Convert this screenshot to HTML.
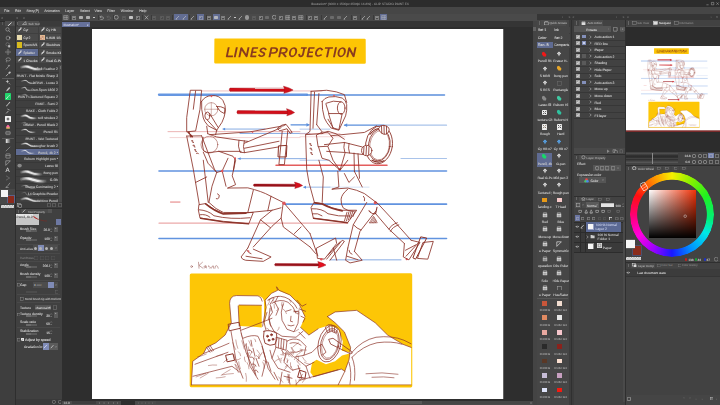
<!DOCTYPE html>
<html><head><meta charset="utf-8"><title>CLIP STUDIO PAINT</title>
<style>
html,body{margin:0;padding:0;background:#3f3f3f;}
body{width:720px;height:405px;overflow:hidden;position:relative;font-family:"Liberation Sans",sans-serif;}
#r{position:absolute;left:0;top:0;width:720px;height:405px;overflow:hidden;filter:blur(0.6px);}
#r div,#r span,#r svg{position:absolute;display:block;box-sizing:content-box;}
#r span{white-space:nowrap;text-rendering:geometricPrecision;-webkit-text-stroke:0.09px;}
</style></head>
<body>
<svg width="0" height="0" style="position:absolute">
<defs>
<linearGradient id="bsg" x1="0" y1="0" x2="1" y2="0"><stop offset="0" stop-color="#fff" stop-opacity=".25"/><stop offset=".3" stop-color="#fff" stop-opacity="1"/><stop offset=".7" stop-color="#fff" stop-opacity=".9"/><stop offset="1" stop-color="#fff" stop-opacity=".15"/></linearGradient>
<symbol id="art" viewBox="92 28.75 411.5 370.5" preserveAspectRatio="none">
<rect x="92" y="28.75" width="411.5" height="370.5" fill="#fff"/>
<!-- title box -->
<path d="M215.2 38.3 Q214.2 38.2 214.4 39.6 L214.2 62 Q214.3 63.3 215.6 63.2 L364.5 63.4 Q365.9 63.4 365.8 62 L365.7 39.8 Q365.8 38.2 364.3 38.4 Z" fill="#fdc504"/>
<g fill="none" stroke="#8a3b1e" stroke-width="1.9" stroke-linecap="square" stroke-linejoin="round"><path transform="translate(226.80 56.15) skewX(-12) scale(1 0.84) translate(0 -10)" d="M0 0V10H5.2"/><path transform="translate(234.90 56.15) skewX(-12) scale(1 0.84) translate(0 -10)" d="M0 0V10"/><path transform="translate(239.50 56.15) skewX(-12) scale(1 0.84) translate(0 -10)" d="M0 10V0L7.1 10V0"/><path transform="translate(251.10 56.15) skewX(-12) scale(1 0.84) translate(0 -10)" d="M4.2 0H0V10H4.2M0 5H3.57"/><path transform="translate(258.90 56.15) skewX(-12) scale(1 0.84) translate(0 -10)" d="M5.2 1.6Q2.86 -0.9 0.62 1.6Q-0.52 4 2.60 5Q5.72 6.2 4.68 8.6Q2.60 11 0 8.6"/><path transform="translate(269.60 56.15) skewX(-12) scale(1 0.84) translate(0 -10)" d="M0 10V0H3.10Q6.2 0.2 6.2 3Q6.2 5.8 3.10 6H0"/><path transform="translate(279.30 56.15) skewX(-12) scale(1 0.84) translate(0 -10)" d="M0 10V0H3.10Q6.2 0.2 6.2 3Q6.2 5.8 3.10 6H0M2.79 6L6.2 10"/><path transform="translate(289.10 56.15) skewX(-12) scale(1 0.84) translate(0 -10)" d="M3.05 0A3.05 5 0 1 0 3.05 10A3.05 5 0 1 0 3.05 0Z"/><path transform="translate(298.80 56.15) skewX(-12) scale(1 0.84) translate(0 -10)" d="M5.2 0H1.30M3.74 0V7Q3.74 10 1.82 10Q0.26 10 0 8"/><path transform="translate(307.50 56.15) skewX(-12) scale(1 0.84) translate(0 -10)" d="M4.3 0H0V10H4.3M0 5H3.65"/><path transform="translate(315.30 56.15) skewX(-12) scale(1 0.84) translate(0 -10)" d="M5.2 1.9Q3.12 -0.9 1.30 1.3Q-0.78 4 0.26 7.5Q1.82 11 5.2 8.4"/><path transform="translate(324.10 56.15) skewX(-12) scale(1 0.84) translate(0 -10)" d="M0 0H6.1M3.05 0V10"/><path transform="translate(334.10 56.15) skewX(-12) scale(1 0.84) translate(0 -10)" d="M0 0V10"/><path transform="translate(337.70 56.15) skewX(-12) scale(1 0.84) translate(0 -10)" d="M3.10 0A3.10 5 0 1 0 3.10 10A3.10 5 0 1 0 3.10 0Z"/><path transform="translate(347.40 56.15) skewX(-12) scale(1 0.84) translate(0 -10)" d="M0 10V0L6.2 10V0"/></g>
<!-- guide lines -->
<g fill="none" stroke-linecap="round">
<path d="M159 94.5 H307" stroke="#6697e2" stroke-width="2.3"/><path d="M307 94.8 H444.5" stroke="#5b8fdc" stroke-width="1.5"/>
<path d="M159 170.8 H446.5" stroke="#6193df" stroke-width="1.6"/>
<path d="M285.5 203.9 H446.5" stroke="#6193df" stroke-width="1.6"/>
<path d="M159 238.3 H446.5" stroke="#6193df" stroke-width="1.6"/>
<path d="M344.5 124.9 H384" stroke="#5b8fdc" stroke-width="1.3"/>
<path d="M384 124.9 H446.5" stroke="#a9c3ea" stroke-width="1.2"/>
<path d="M401 158.2 H446.5" stroke="#a9c3ea" stroke-width="1.1"/>
<path d="M330 259.6 H401" stroke="#7aa3e0" stroke-width="0.9"/>
<path d="M223 128.8 H265" stroke="#7aa3e0" stroke-width="0.9"/>
<path d="M240 133.2 H310" stroke="#7aa3e0" stroke-width="0.9"/>
<path d="M238 158.4 H306" stroke="#7aa3e0" stroke-width="0.9"/>
<path d="M291 124.6 H309" stroke="#5b8fdc" stroke-width="1.2"/>
<path d="M304 186.9 H330" stroke="#7aa3e0" stroke-width="0.8"/><path d="M330 186.9 H369" stroke="#c3d5f0" stroke-width="0.7"/>
<path d="M300 128.9 H330" stroke="#a9c3ea" stroke-width="0.9"/>
<path d="M300 160 H330" stroke="#a9c3ea" stroke-width="0.9"/>
<!-- red guide lines -->
<path d="M202 90.7 H322" stroke="#e9a3a3" stroke-width="0.7"/>
<path d="M168 131.4 H300" stroke="#e6a0a0" stroke-width="0.8"/>
<path d="M170 137.3 H300" stroke="#efc4c4" stroke-width="0.7"/>
<path d="M159 222.9 H347" stroke="#eca9a9" stroke-width="1.1"/>
<path d="M170.5 201.8 H180" stroke="#e06a6a" stroke-width="0.9"/>
<path d="M276 165 H387" stroke="#e35d5d" stroke-width="1.5"/>
<path d="M300 133.5 H340" stroke="#eeb5b5" stroke-width="0.8"/>
<path d="M300 136.5 H345" stroke="#f3cdcd" stroke-width="0.8"/>
</g>
<!-- arrows -->
<g stroke="#a01018" stroke-width="0.45" stroke-linejoin="round">
<path d="M230.0 87.85 L285.0 87.95 L285.0 91.15 L230.0 91.05 Q228.6 89.50 230.0 87.85Z" fill="#d20f1a"/><path d="M284.3 87.95 L283.5 85.90 Q289.8 87.52 293.1 89.80 Q289.8 91.66 283.8 93.10 L284.4 91.15Z" fill="#d20f1a"/>
<path d="M237.6 110.35 L288.0 110.45 L288.0 113.65 L237.6 113.55 Q236.2 112.00 237.6 110.35Z" fill="#d20f1a"/><path d="M287.3 110.45 L286.5 108.40 Q292.1 110.02 294.6 112.30 Q292.1 114.16 286.8 115.60 L287.4 113.65Z" fill="#d20f1a"/>
<path d="M254.1 183.85 L296.0 183.95 L296.0 186.15 L254.1 186.05 Q252.7 185.00 254.1 183.85Z" fill="#96121a"/><path d="M295.3 183.95 L294.5 181.80 Q300.1 183.24 302.6 185.30 Q300.1 186.92 294.8 188.20 L295.4 186.15Z" fill="#d8101c"/>
<path d="M275.2 263.35 L319.3 263.45 L319.3 265.65 L275.2 265.55 Q273.8 264.50 275.2 263.35Z" fill="#96121a"/><path d="M318.6 263.45 L317.8 261.30 Q323.4 262.74 326.0 264.80 Q323.4 266.42 318.1 267.70 L318.7 265.65Z" fill="#e4101e"/>
</g>
<!-- small blue arrowheads -->
<g fill="#5b8fdc">
<path d="M309.5 124.6 l-3 -1.8 v3.6z"/>
<path d="M344 124.9 l3.2 -1.9 v3.8z"/>
<path d="M303 186.9 l3 -1.5 v3z"/>
<path d="M238 158.4 l2.6 -1.4 v2.8z"/>
<path d="M222.5 128.8 l2.6 -1.4 v2.8z"/>
</g>
<!-- FIGURE 1 -->
<g fill="none" stroke="#8c3329" stroke-width="0.85" stroke-linecap="round" stroke-linejoin="round">
<path d="M190.7 90 L201.6 90 L200.6 101 L200 109 L195.6 130.7 L186.7 131.6 L186.7 117.8 Z"/>
<path d="M195.6 90.7 L193.3 109"/>
<path d="M188 132 L192.5 136.5 M189 132 L191 136.8" stroke-width="1.2"/>
<path d="M186.7 135.8 L193.3 168.9 L199.3 204.4"/>
<path d="M201.6 135.6 L214.4 168.9 L216.7 172.2"/>
<path d="M186.9 135.8 L201.6 135.6"/>
<path d="M191.5 140.5 q2 -0.8 1.2 0.8 q-0.8 1 0.8 1 M193 145 q2 -0.8 1.2 0.8 q-0.8 1 0.8 1 M194.4 149.5 q2 -0.8 1.2 0.8 q-0.8 1 0.8 1 M196.5 153 q1.5 -1 2 0.5" stroke-width="0.9"/>
<!-- head -->
<path d="M201.6 101.1 Q205 95.5 212.2 95.3 Q219 95 222.8 100 Q226 105 225.4 111 Q224.5 117 222 122 L216.7 130 L208.2 125.6 Q204 121 203.3 117.8 Q201 109 201.6 101.1Z"/>
<path d="M216.7 106.2 Q221 105.8 225 108.2 L224.4 113.3 Q220 112.5 216.7 106.2"/>
<circle cx="211.3" cy="109" r="6.6" stroke-width="0.45"/>
<path d="M211.3 102.4 V115.6 M204.7 109 H218" stroke-width="0.35"/>
<ellipse cx="207.3" cy="115.6" rx="2.4" ry="3.8"/>
<path d="M207 119.5 L216.7 130 M209.5 113 L218 127"/>
<path d="M206.7 126 L207.8 133.5 M216.7 130 L215.6 134.5"/>
<!-- shoulder, arm -->
<path d="M203 137 Q201.5 144 203.5 150.5 Q207 153.5 212 152 L218.9 151.1"/>
<circle cx="209.4" cy="144.4" r="8.4" stroke-width="0.5"/>
<path d="M207.8 133.5 Q213 135.5 216.7 136.7 L238.9 140 L247.8 141.1"/>
<path d="M218.9 151.1 L241.1 151.1"/>
<path d="M238.9 140 Q237.5 146 240 152 L244.5 152.4 Q242.5 146.5 244.3 140.6"/>
<path d="M244.3 143 L281 127.5 M244.5 152.4 L279 146.6 M244.5 148 L279 141"/>
<path d="M210 134.4 L250 131.6 L283.3 125.6 L285.6 124.4"/>
<path d="M277.8 127.8 Q282 123.8 286 124 L292.2 132.2 L290 133 L287 128.5 L280 130.5Z"/>
<path d="M282.2 131.1 L278.9 164.4 L284.4 164.4 L287.8 130.5"/>
<path d="M278.9 145.6 L286.9 145.2 L286.3 156.7 L278.4 156.7Z" stroke-width="1"/>
<!-- torso -->
<path d="M203.3 152 L208 163 L216.7 172.2 L212 186 L208.9 202.2"/>
<path d="M218.9 151.1 L233 156 L235.6 160 L232.2 175.6 L235.6 184.4 L227.8 187.8"/>
<path d="M228 158 L222.2 170.7 L216.7 172.2 M222.2 170.7 L226 186"/>
<path d="M235.1 158.2 L233.5 170" stroke-width="1"/>
<path d="M195.6 182.2 L206.7 176.7"/>
<path d="M203.3 160 L208.2 202"/>
<!-- hip and thigh -->
<path d="M227.8 187.8 L247.8 187.6 Q262 191 270 195.6 L283.3 202.2"/>
<path d="M208.9 202.2 Q216 209.5 223.3 212.2 L247.8 212.4 L272.2 210 L281 207.5"/>
<path d="M253.3 190 L247.8 212.2 M271 196 L267.8 210.5"/>
<path d="M217.5 193.5 q3 1 1.4 4 q-1 1.6 -2.6 1" />
<!-- seat -->
<path d="M199.3 204.4 L205.6 203.3 Q214 210 223.3 213.3 L253.3 212.2 L248.9 223.3 L223.3 221.1 L200 217.8 L198.4 210 Z"/>
<path d="M205.6 203.6 Q214 210.5 223.3 213.8 L246 213" stroke-width="1.5"/>
<path d="M199 209.5 Q208 210 214 215.5 Q230 219.5 250 217.5 M200 214.5 Q206 213.5 210 217"/>
<path d="M200.5 218 L223.3 221.6 L248.6 223.6" stroke-width="1.3"/>
<!-- legs -->
<path d="M283.3 202.2 L281.1 217.8 L283.3 226.7 L310 246.7"/>
<path d="M284.4 203.3 L310 233.3"/>
<path d="M272.2 210 L260.5 219.5 L247.8 247.8"/>
<path d="M281.1 217.8 L272 226 L253.3 246.7"/>
<path d="M260.5 219.5 L270.5 227.5" />
<path d="M301.1 226.7 L294.4 233.3"/>
<path d="M247.8 247.8 L241.1 256.7 Q242 259.5 245.6 260 L263.3 261.1 L271.1 256.7 L253.3 248.9"/>
<path d="M247 250 q1.5 3 4 3.5 M246 256 L262 258.5"/>
<path d="M310 233.3 L317.8 255.6 M310 246.7 L315.6 253.3"/>
<path d="M316.7 247.8 L335.6 237.8 L336.7 243.3 L324.4 258.9 L317.8 258.2Z"/>
<path d="M326.7 258.9 L342.2 240 L344.4 241.1 L330 260 M333.3 247.8 L336.7 260 M328 255 L340 241.5"/>
</g>
<!-- red dots fig 1 -->
<g fill="#e2565d">
<circle cx="222.2" cy="170.7" r="1.3"/><circle cx="284" cy="203" r="1.7"/><circle cx="235.1" cy="158" r="1"/>
<circle cx="321.3" cy="259" r="1.2"/><circle cx="406.7" cy="259" r="1.1"/><circle cx="375.3" cy="202.4" r="1.6"/><circle cx="339.6" cy="169" r="1.2"/>
<circle cx="211.5" cy="96" r="0.9"/><circle cx="334" cy="95.3" r="0.9"/><circle cx="252.5" cy="132" r="0.8"/>
<circle cx="248.5" cy="251" r="0.9"/>
</g>
<!-- FIGURE 2 -->
<g fill="none" stroke="#8c3329" stroke-width="0.85" stroke-linecap="round" stroke-linejoin="round">
<path d="M311.1 91.1 L326.7 90 Q337 91 344.4 94.4 L346.7 102.2"/>
<path d="M311.1 91.1 L310 131.1 L305.6 134.4 L306.7 168.9 L308.9 182 L314.4 202.2"/>
<path d="M318.9 93.3 L316.7 124.4 M314.5 92 L313 128"/>
<path d="M305.6 134.4 L322.2 133.3"/>
<path d="M309.5 143.5 q2 -0.8 1.2 0.8 q-0.8 1 0.8 1 M310 148 q2 -0.8 1.2 0.8 q-0.8 1 0.8 1 M310.5 152.5 q2 -0.8 1.2 0.8 q-0.8 1 0.8 1" stroke-width="0.9"/>
<path d="M322.2 101.1 Q324.5 97.5 328.9 96.7 Q336 95.5 342.2 97.8 Q346 100 346.7 104.4 Q347.2 110 345.6 115.6 L338.9 130 L331.1 127.8 Q326 122 324.4 117.8 Q321.8 109 322.2 101.1Z"/>
<ellipse cx="341.2" cy="107.8" rx="3.8" ry="6.2"/>
<path d="M326 103 Q333 99.5 341 101.5" />
<path d="M328.9 113.3 L342.2 113.3 L338.9 129.3 L333.3 127.8 Z"/>
<path d="M326 104 L328.9 113.3 M328 119 L333.3 127.8"/>
<path d="M316.7 124.4 L322 131.5 M322.2 133.3 L328 131 L336 133.5 L344.4 139"/>
<path d="M316.7 134.5 Q322 130.5 328 132 L333 138 L328 146 L318.5 146.5Z"/>
<path d="M331 135.5 L364.4 132.2 L376.7 125.6"/>
<path d="M324.4 144.4 L344.4 142.2 L362.2 146.7 M326.7 151.1 L344.4 152.2 L364.4 154.4"/>
<path d="M344.4 142.2 Q343 147 344.8 152.2 M349 143.2 Q347.8 148 349.5 152.8"/>
<ellipse cx="379" cy="144.6" rx="13.4" ry="19" transform="rotate(8 379 144.6)"/>
<ellipse cx="379.3" cy="144.8" rx="10.8" ry="16" transform="rotate(8 379.3 144.8)"/>
<ellipse cx="379.6" cy="145" rx="9.8" ry="14.8" transform="rotate(8 379.6 145)" stroke-width="0.5"/>
<path d="M372 160 Q378 163.5 384 160.5" stroke-width="1.3"/>
<path d="M370 134 Q374 129 378 128.5" stroke-width="1.2"/>
<circle cx="366.7" cy="150.3" r="5.2" fill="#fff"/>
<path d="M364 146.5 L363.5 154 M366.5 146 L366 154.8 M369 146.5 L368.6 154.5"/>
<path d="M378.5 128.5 Q380 124.8 384 125.2 Q388.8 125.8 389.2 129.5 Q389 133.2 385.5 134 Q381 134.5 378.5 128.5Z" fill="#fff"/>
<path d="M381.5 126 L381.8 133 M384 125.5 L384.2 133.8 M386.5 126 L386.6 133.5"/>
<!-- torso 2 -->
<path d="M318.9 160 L323.3 176.7 L322.2 202.2"/>
<path d="M318.5 146.5 L322 158 L328.9 160 L340 170 L347.8 160"/>
<path d="M337.8 171.1 L338.9 186.7 L332.2 188.9"/>
<path d="M354.4 171.1 L362.2 186.7 M354 152.8 L354.4 171.1 M358 153.5 L359.5 178"/>
<path d="M344.4 173.3 L348.9 182.2 L354.4 176.7"/>
<path d="M328 146.5 L333 160 L340 170 L345 153"/>
<path d="M332.2 188.9 L347.8 187.8 Q357 189.5 364.4 193.3 L377.8 203.3"/>
<path d="M347.8 188.9 Q341.5 194 341.1 198.9 Q340.8 204.5 343.3 207.8 Q347.5 210.8 353.3 211.1"/>
<path d="M363.5 196 q1.8 1.5 1 4.5"/>
<!-- seat 2 -->
<path d="M314.4 202.2 L322.2 203.3 Q332 208.5 342.2 210 L356.7 210 L347.8 222.2 L313.3 217.8 L311.1 207.8Z"/>
<path d="M314.6 202.6 L322.2 203.8 Q332 209 342.2 210.6" stroke-width="1.6"/>
<path d="M312 208.5 Q322 208 328 213.5 Q338 216.5 350 215.8 M312.5 213.5 Q318 212.5 322 215.5"/>
<path d="M313.5 218.2 L347.6 222.6" stroke-width="1.3"/>
<path d="M347 212 l-2.5 8.5 M349 211.5 l-2.5 9 M351 211.2 l-2.6 8.5 M353 211 l-2.6 7.5 M355 210.8 l-2 5.5" stroke-width="0.8"/>
<!-- legs 2 -->
<path d="M366.7 202.2 L353.3 224.4 L347.8 247.8"/>
<path d="M375.6 211.1 L360 231.1 L354.4 251.1"/>
<path d="M353.3 224.4 Q357 228.5 361 229.8"/>
<path d="M369 210.5 Q372 214.5 375.6 213.3 L377 207" stroke-width="1.1"/><path d="M369.5 222.5 L373.5 216 L377 222 M370.8 222.6 L374 217.2 M372.4 222.6 L374.6 218.6 M373.8 222.6 L375.4 219.6 M375.4 222.4 L376 220.6 M369.5 222.5 H377" stroke-width="0.6"/>
<path d="M377.8 203.3 L393.3 220 L411.1 240"/>
<path d="M375.6 213.3 L388.9 228.9 L404.4 243.3"/>
<path d="M388.9 228.9 Q391 224.5 397.3 222.5 M390.5 231 Q392.5 226.5 398.8 224.6"/>
<path d="M347.8 247.8 L345.6 260 L350 262.7 L362.2 260 L354.4 251.1"/>
<path d="M347 256 L358 259.5 M349 250 q0 3 3 4"/>
<path d="M404.4 243.3 L403.3 256.7 L408.9 259.6 L420 242.2 L411.1 240"/>
<path d="M405.5 250 L416 244.5 M406 256 L418 243" />
<path d="M421.1 236.7 L426.7 237.8 L415.6 258.9 L413.3 257.8Z" stroke-width="1"/>
<path d="M423.3 242.2 L433.3 241.1 L427.8 258.9 L417.8 258.2Z"/>
</g>
<!-- signature -->
<g fill="none" stroke="#9a5a55" stroke-width="0.55" stroke-linecap="round">
<circle cx="191.6" cy="266.3" r="0.9"/>
<path d="M198.5 262 L199 268 M202.5 262 L199 265.2 L203 268 M205.5 265.5 q-1.8 0 -1.6 1.5 q0.5 1.2 2 0 l0 -1.5 l0.5 2.2 M208.5 265.5 q-0.6 1.4 1.2 1.2 q1.4 0 0.4 1.4 M211.5 267.8 q0.4 -2.6 1.8 -2.2 l0.4 2.4 M215 268 l0.4 -2.2 q1.6 -1 2.2 0.4 l0.6 1.8"/>
</g>
<!-- bottom panel -->
<path d="M191.4 273.3 Q189.7 273.3 189.8 275 L189.7 385.6 Q189.8 387.1 191.3 387 L410.8 387.2 Q412.4 387.1 412.3 385.7 L412.2 274.6 Q412.2 273 410.6 273.1 Z" fill="#fdc606"/>
<g fill="#fff" stroke="none">
<path d="M191.4 384.6 L192.7 361 L203.5 353.3 L206.6 347.2 L215.9 342.5 L225.1 334.8 L228.2 328.6 L231.3 322.5 L229.6 303 Q229.8 295.6 236.4 295.3 L258 295.6 Q263 296.5 264 300.9 L264.4 327 L266.5 307 L265.5 300 L271.4 293.1 L277.6 290.1 L289.9 294.7 L299.2 304 L305 316.3 L300.5 327.1 L308.9 334.8 L318.1 328.6 L329 324.9 L338.2 328.6 L342.8 341 L341.8 350.5 L352.5 352.4 L342 355.2 L335.1 361 L325.9 364.1 L316.6 359.5 L312 362.6 L310.4 371.9 L313.5 376.5 L341.3 368.8 L345 371 L338.2 384.6 Z"/>
<path d="M327.4 316.3 L335.1 311.7 L356.7 310.1 L375.2 322.5 L387.6 334.8 L403 344.1 L411.2 347.2 L411.2 384.6 L338.2 384.6 L344.4 371.9 L349 359.5 L350.6 347.2 L344.4 331.7 L335.1 322.5 Z"/>
</g>
<path d="M239.2 304.8 Q238.2 304.8 238.2 305.8 L239.2 325.8 L249 326.2 L261.8 327.2 L261.6 305 Z" fill="#fdc606"/>
<!-- bottom line art -->
<g fill="none" stroke="#8c3329" stroke-width="0.7" stroke-linecap="round" stroke-linejoin="round">
<path d="M191.4 384.6 L192.7 361 L203.5 353.3 L206.6 347.2 L215.9 342.5 L225.1 334.8 L228.2 328.6 L231.3 322.5 L229.6 303 Q229.8 295.6 236.4 295.3 L258 295.6 Q261.5 296.5 262.2 300.9"/>
<path d="M239.2 304.8 L261.6 305 M238.2 305.8 L239.2 325.8"/>
<path d="M228.5 324 L239 322 L240.5 328 L229.5 330.5Z" stroke-width="0.9"/>
<path d="M231 331 L236 360 L243 378 M240 328 L246 352 L256 375"/>
<path d="M206.6 347.2 L210 352 M208 346 L212 351.5 M210 345.2 L213.5 350.5"/>
<path d="M203.5 353.3 L222 346 L229 343 M195 364 L228 352 M193 376 L232 366 L240 372"/>
<path d="M226 355 L233 353.5 L234.5 360 L227.5 361.5Z" stroke-width="1"/>
<path d="M241 330 L262 322 L272 318"/>
<path d="M243 338 Q252 334 258 336 L262 345 L268 368 L275 379"/>
<path d="M246 344 L250 366 L258 379 M251 340 l1 6 M253 348 l2 8 M256 358 l3 8"/>
<path d="M248 350 q3 -1 4 2 M250 357 q3 -1 4 2 M252 364 q3 -1 4 2 M254 370 q3 -1 4 2"/>
<!-- hair/head -->
<path d="M262.6 326 L266 307 L265 300 L271.4 293.1 L277.6 290.1 L276.5 286.5 L279 290 L289.9 294.7 L299.2 304 L305 316.3"/>
<path d="M268 300 Q276 294 285 297 Q293 300 297 308 M272 303 Q280 298 288 302 Q294 306 296 313"/>
<path d="M270 308 Q268 316 270 324 L274 331 M267 312 L264 322 L266 330"/>
<path d="M283 304 Q280 312 282 320 L287 329 L294 331.5 L298 323 L299 312"/>
<path d="M286 311 L291 309.5 M294 311.5 L298.5 311 M291 316 l-0.5 5 l2 0.5 M288 325 q3 1.5 6 0"/>
<path d="M297 300 L302 306 L306 304 M300 309 L305.5 311 M301 316 L305 318 L303 322"/>
<path d="M274 298 L270 304 L272.5 312 L268.5 318 L271 326"/>
<path d="M278 296 L275 302 L278.5 309 L276 315"/>
<!-- neck, collar, shoulder pad -->
<path d="M274 331 L282 336 L296 337 L303 331"/>
<path d="M264 331 Q262.5 337 265 343 Q270 346.5 275 344 Q278 339 276.5 333 Q270 329 264 331Z" stroke-width="0.9"/>
<circle cx="267.5" cy="336" r="1" fill="#8c3329"/><circle cx="271.5" cy="334.5" r="1" fill="#8c3329"/><circle cx="269" cy="340" r="1" fill="#8c3329"/><circle cx="273" cy="339" r="1" fill="#8c3329"/>
<path d="M276.5 337 L287 340 L286 350 L276 347Z"/>
<path d="M279 338 L278.3 347.6 M281.5 338.7 L280.8 348.3 M284 339.3 L283.3 349"/>
<path d="M287 341 Q293 337 300 340 L306 346 L304 355 L294 357 L287 350"/>
<path d="M290 343 Q296 341 301 345 M291 352 Q297 353 302 350"/>
<path d="M300.5 327.1 L308.9 334.8 L318.1 328.6 M304 355 L312 352 L318 346 M299 332 L305 338"/>
<path d="M276 347 L272 358 L278 368 L290 372 M286 352 L284 362 L292 370 L300 368"/>
<path d="M296 358 L306 366 L314 362 M298 365 L302 378 L296 384 M306 366 L310 378"/>
<path d="M262 346 L266 360 L262 376 M270 350 l2 8 M268 362 l3 9 M274 372 l4 8"/>
<path d="M282 372 L280 384 M288 374 L290 384 M284 376 L292 378"/>
<path d="M300 370 l6 2 l-1 6 l-7 -1z" stroke-width="1"/>
</g><g id="dens"><path d="M286.4 351.1Q287.5 352.7 289.1 356.1M291.7 347.3Q292.2 348.6 294.5 351.6M289.3 374.1Q290.2 377.3 289.3 380.3M288.5 379.2Q289.2 380.4 288.5 382.4M281.2 350.0Q282.8 351.6 284.0 352.7M287.8 364.6Q285.7 365.1 285.3 366.8M296.7 360.5Q298.1 363.1 300.2 364.5M297.3 354.3Q295.9 357.6 294.4 359.4M298.2 355.8Q298.7 357.6 298.2 360.9M291.2 347.3Q292.9 350.4 293.6 353.2M302.4 356.7Q304.1 359.7 306.0 361.3M304.4 362.1Q306.5 363.6 310.4 364.2M295.8 379.8Q296.3 381.3 296.3 384.7M290.4 351.7Q290.9 353.4 293.1 354.0M280.8 354.4Q282.3 354.7 284.1 354.8M302.6 373.9Q300.3 376.8 298.8 380.1M287.4 376.1Q286.8 377.5 287.3 379.9M291.1 366.0Q291.0 367.8 293.0 369.9M287.7 365.3Q286.2 367.8 284.2 369.6M278.6 376.6Q281.4 379.9 282.8 382.0M288.4 359.6Q286.8 360.5 287.0 362.6M281.7 357.6Q280.3 358.4 280.9 360.7M279.9 358.4Q276.6 359.4 274.7 361.4M287.1 358.4Q288.0 361.2 287.5 362.0M290.5 362.5Q290.2 365.5 290.8 367.2M281.7 346.8Q282.4 349.9 283.1 354.4M292.8 346.9Q296.0 344.1 298.4 342.3M287.6 351.7Q289.9 354.9 292.0 357.0M286.6 353.6Q285.7 357.5 283.6 360.2M298.5 353.7Q300.4 351.1 302.9 350.3M277.8 355.5Q279.3 359.9 280.9 362.6M305.7 378.5Q303.5 379.7 302.5 382.1M282.7 352.9Q286.2 353.8 289.8 354.1M300.2 348.9Q304.1 350.0 306.4 349.9M259.0 354.3Q259.3 357.3 258.3 358.5M251.9 351.6Q250.7 353.9 248.6 357.5M246.5 343.1Q246.4 345.7 244.9 346.3M257.1 349.9Q257.9 351.1 260.2 354.1M263.4 360.1Q266.3 361.7 267.8 361.9M248.2 346.6Q248.4 348.7 249.6 350.5M249.2 352.2Q248.1 354.4 247.2 356.2M262.1 352.3Q260.4 355.2 258.7 358.1M254.5 338.6Q255.7 339.3 255.7 341.4M253.5 362.7Q253.3 365.3 253.8 367.9M255.1 364.7Q254.1 367.1 254.1 368.5M254.2 357.1Q254.5 360.0 253.1 363.1M256.3 355.2Q258.1 356.7 259.8 358.4M262.8 361.8Q264.4 364.5 264.3 368.1M255.2 370.1Q255.2 371.0 255.4 373.6M248.8 340.5Q250.4 343.9 250.9 345.8M247.1 362.3Q249.0 364.9 249.0 368.6M263.1 351.5Q264.9 354.5 264.9 356.1M247.2 352.7Q247.9 354.7 249.3 355.9M244.4 356.8Q243.9 358.8 245.4 361.5M286.5 313.4Q285.6 310.2 282.8 308.5M273.6 297.3Q270.3 297.8 267.9 299.7M279.2 327.0Q279.2 328.7 277.6 330.2M289.2 299.0Q290.3 300.4 290.6 302.0M266.6 327.9Q268.6 328.1 269.2 330.1M295.1 311.4Q297.0 313.5 298.7 313.8M273.6 300.4Q273.7 301.0 275.2 303.5M271.3 306.6Q271.6 308.3 271.0 310.8M282.0 302.0Q280.9 304.5 281.7 306.0M283.8 302.4Q284.0 304.0 282.3 307.1M293.5 310.7Q295.8 311.3 298.0 311.1M299.4 307.7Q299.1 311.0 297.9 313.8M278.6 307.8Q278.1 308.7 276.7 310.5M269.9 298.9Q269.6 302.2 267.8 304.9M274.1 304.2Q274.2 305.6 274.5 307.9M298.6 329.1Q295.8 331.2 294.0 331.4M208.4 365.3Q212.5 364.4 216.7 364.8M216.2 356.1Q218.7 355.0 222.8 354.4M197.7 356.6Q202.1 355.7 206.3 353.8M222.3 374.6Q227.6 373.6 233.4 373.3M235.4 359.9Q238.6 359.9 240.4 358.3M221.1 375.1Q224.9 372.3 230.2 369.4M216.2 377.7Q221.5 377.5 225.2 376.5M223.7 362.0Q225.1 360.2 227.9 358.9M200.2 377.7Q204.6 375.3 208.3 372.9M196.1 376.7Q200.9 375.0 205.7 373.1M241.2 333.0Q241.4 335.6 242.4 337.2M234.9 364.0Q236.6 367.9 238.3 372.2M238.7 361.5Q238.7 364.3 240.4 368.5M235.6 364.2Q237.0 365.6 238.2 369.0M232.8 342.4Q233.8 345.8 235.6 349.2M238.5 351.5Q240.4 352.9 240.7 355.5M245.7 373.1Q246.9 377.0 246.3 381.1M235.8 339.7Q236.2 344.1 237.8 348.1M234.0 354.1Q234.7 358.9 235.4 362.1M241.8 340.6Q243.0 343.8 244.3 348.8" fill="none" stroke="#8c3329" stroke-width="0.5" stroke-linecap="round" opacity="0.85"/></g><g fill="none" stroke="#8c3329" stroke-width="0.7" stroke-linecap="round" stroke-linejoin="round"><!-- steering wheel -->
<ellipse cx="329.5" cy="343.5" rx="11.2" ry="18.6" transform="rotate(14 329.5 343.5)"/>
<ellipse cx="329.8" cy="343.8" rx="9" ry="15.8" transform="rotate(14 329.8 343.8)"/>
<ellipse cx="330" cy="344" rx="7.8" ry="14.2" transform="rotate(14 330 344)" stroke-width="0.45"/>
<path d="M325.5 326.5 Q328 323.5 331.5 324.5 Q335 325.5 337.5 329 L336 333 L331.5 331 L328 332.5Z"/>
<path d="M329 325 l0.5 6 M332 325.2 l0.3 6 M334.5 327 l-0.2 5"/>
<path d="M329 339 L333 338 L351.5 351.2 L352.3 352.8 L350.5 353.5 L331 344 Z" stroke-width="0.8"/>
<path d="M318 346 L322 344 L326 352 L322 355"/>
<!-- hood -->
<path d="M327.4 316.3 L335.1 311.7 L356.7 310.1 L375.2 322.5 L387.6 334.8 L403 344.1 L411.2 347.2"/>
<path d="M327.4 316.3 L335.1 322.5 L344.4 331.7 L350.6 347.2 L349 359.5 L344.4 371.9 L338.2 384.6"/>
<path d="M352 352 Q362 340 376 337 Q392 335 404 340 L411 343.5"/>
<path d="M352 357 Q363 345.5 377 342.5 Q392 340.5 402 344"/>
<path d="M349 362 Q352 372 350 384 M352 357 Q356 366 354.5 380"/>
<path d="M366 373.5 Q382 371.5 398 374 M372 377 Q384 376 394 377.5" stroke-width="0.6"/>
<path d="M313.5 376.5 L341.3 368.8 L345 371 M300 380 L338 369.5"/>
<path d="M191.4 384.6 L411.2 384.6" stroke-width="0.5"/>
</g>
</symbol>
</defs>
</svg>

<div id="r">
<div style="left:0.00px;top:0.00px;width:720.00px;height:6.80px;background:#2c2c2c;"></div>
<div style="left:0.00px;top:6.80px;width:720.00px;height:6.80px;background:#464646;"></div>
<div style="left:0.00px;top:13.60px;width:720.00px;height:7.30px;background:#4a4a4a;"></div>
<div style="left:0.00px;top:13.60px;width:62.00px;height:7.30px;background:#363636;"></div>
<div style="left:536.50px;top:14.20px;width:183.50px;height:5.60px;background:#363636;"></div>
<div style="left:62.00px;top:20.90px;width:474.00px;height:6.30px;background:#353535;"></div>
<div style="left:62.00px;top:27.00px;width:471.00px;height:373.50px;background:#2e2e2e;"></div>
<span style="left:309.50px;top:2.02px;font-size:3.2px;line-height:4.80px;height:4.80px;color:#8a8a8a;width:101.00px;text-align:center;clip-path:inset(-1px 0 -1px 0);">Illustration* (3000 x 1500px 350dpi 14.8%) - CLIP STUDIO PAINT EX</span>
<svg style="left:703.00px;top:1.00px;" width="17" height="6" viewBox="0 0 17 6"><path d="M3.4 3.8h2.2M8.4 1.4h2.4v2.4h-2.4zM13.4 1.4l2.4 2.4M15.8 1.4l-2.4 2.4" stroke="#a2a2a2" stroke-width="0.55" fill="none"/></svg>
<span style="left:3.90px;top:9.02px;font-size:3.5px;line-height:5.25px;height:5.25px;color:#c4c4c4;">File</span>
<span style="left:15.00px;top:9.02px;font-size:3.5px;line-height:5.25px;height:5.25px;color:#c4c4c4;">Edit</span>
<span style="left:26.40px;top:9.02px;font-size:3.5px;line-height:5.25px;height:5.25px;color:#c4c4c4;">Story(P)</span>
<span style="left:44.20px;top:9.02px;font-size:3.5px;line-height:5.25px;height:5.25px;color:#c4c4c4;">Animation</span>
<span style="left:65.30px;top:9.02px;font-size:3.5px;line-height:5.25px;height:5.25px;color:#c4c4c4;">Layer</span>
<span style="left:79.90px;top:9.02px;font-size:3.5px;line-height:5.25px;height:5.25px;color:#c4c4c4;">Select</span>
<span style="left:94.40px;top:9.02px;font-size:3.5px;line-height:5.25px;height:5.25px;color:#c4c4c4;">View</span>
<span style="left:107.20px;top:9.02px;font-size:3.5px;line-height:5.25px;height:5.25px;color:#c4c4c4;">Filter</span>
<span style="left:120.80px;top:9.02px;font-size:3.5px;line-height:5.25px;height:5.25px;color:#c4c4c4;">Window</span>
<span style="left:139.20px;top:9.02px;font-size:3.5px;line-height:5.25px;height:5.25px;color:#c4c4c4;">Help</span>
<svg style="left:63.20px;top:14.80px;" width="5.6" height="5.2" viewBox="0 0 5.6 5.2"><path d="M0.6 0.6h4.4v4h-4.4zM0.6 2.6h4.4M2 0.6v4M3.6 0.6v4" stroke="#c8c8c8" stroke-width="0.4" fill="none"/></svg>
<svg style="left:72.10px;top:15.50px" width="4.10" height="4.10"><rect x="0.28" y="0.28" width="3.55" height="3.55" rx="0.40" ry="0.40" fill="none" stroke="#c8c8c8" stroke-width="0.55"/></svg>
<div style="left:73.10px;top:17.10px;width:1.80px;height:1.20px;background:#c8c8c8;opacity:.5;"></div>
<div style="left:79.00px;top:16.00px;width:4.00px;height:3.00px;background:#c8c8c8;border-radius:0.8px;opacity:.8;"></div>
<div style="left:86.00px;top:16.00px;width:4.00px;height:3.00px;background:#c8c8c8;border-radius:0.8px;opacity:.8;"></div>
<div style="left:93.00px;top:17.20px;width:2.00px;height:0.50px;background:#c8c8c8;"></div>
<svg style="left:98.50px;top:14.90px;" width="5" height="5" viewBox="0 0 5 5"><path d="M1 1.8h2.2a1.3 1.3 0 0 1 0 2.6H1.4M1 1.8l1.2-1.2M1 1.8l1.2 1.2" stroke="#c8c8c8" stroke-width="0.5" fill="none"/></svg>
<svg style="left:106.00px;top:14.90px;" width="5" height="5" viewBox="0 0 5 5"><path d="M1 1.8h2.2a1.3 1.3 0 0 1 0 2.6H1.4M1 1.8l1.2-1.2M1 1.8l1.2 1.2" stroke="#737373" stroke-width="0.5" fill="none"/></svg>
<svg style="left:114.40px;top:15.30px" width="4.50" height="4.50"><rect x="0.28" y="0.28" width="3.95" height="3.95" rx="1.98" ry="1.98" fill="none" stroke="#c8c8c8" stroke-width="0.55"/></svg>
<svg style="left:122.10px;top:15.50px" width="4.10" height="4.10"><rect x="0.28" y="0.28" width="3.55" height="3.55" rx="0.40" ry="0.40" fill="none" stroke="#737373" stroke-width="0.55"/></svg>
<div style="left:123.10px;top:17.10px;width:1.80px;height:1.20px;background:#737373;opacity:.5;"></div>
<div style="left:128.50px;top:16.00px;width:4.00px;height:3.00px;background:#e2e2e2;border-radius:0.8px;opacity:.8;"></div>
<svg style="left:135.60px;top:15.50px" width="4.10" height="4.10"><rect x="0.28" y="0.28" width="3.55" height="3.55" rx="0.40" ry="0.40" fill="none" stroke="#c8c8c8" stroke-width="0.55"/></svg>
<div style="left:136.60px;top:17.10px;width:1.80px;height:1.20px;background:#c8c8c8;opacity:.5;"></div>
<svg style="left:143.80px;top:14.90px;" width="5" height="5" viewBox="0 0 5 5"><path d="M0.8 0.6L4.2 4.4M4.2 0.6L0.8 4.4" stroke="#c8c8c8" stroke-width="0.6" fill="none"/></svg>
<svg style="left:152.10px;top:15.50px" width="4.10" height="4.10"><rect x="0.28" y="0.28" width="3.55" height="3.55" rx="0.40" ry="0.40" fill="none" stroke="#737373" stroke-width="0.55"/></svg>
<div style="left:153.10px;top:17.10px;width:1.80px;height:1.20px;background:#737373;opacity:.5;"></div>
<svg style="left:159.60px;top:15.50px" width="4.10" height="4.10"><rect x="0.28" y="0.28" width="3.55" height="3.55" rx="0.40" ry="0.40" fill="none" stroke="#737373" stroke-width="0.55"/></svg>
<div style="left:160.60px;top:17.10px;width:1.80px;height:1.20px;background:#737373;opacity:.5;"></div>
<svg style="left:166.10px;top:15.50px" width="4.10" height="4.10"><rect x="0.28" y="0.28" width="3.55" height="3.55" rx="0.40" ry="0.40" fill="none" stroke="#737373" stroke-width="0.55"/></svg>
<div style="left:167.10px;top:17.10px;width:1.80px;height:1.20px;background:#737373;opacity:.5;"></div>
<div style="left:174.20px;top:14.30px;width:6.80px;height:6.00px;background:#626d93;"></div>
<svg style="left:175.10px;top:14.90px;" width="5" height="5" viewBox="0 0 5 5"><path d="M0.8 4.2L4 1M0.8 4.2h1.4" stroke="#c8c8c8" stroke-width="0.6" fill="none"/></svg>
<div style="left:181.00px;top:14.30px;width:6.80px;height:6.00px;background:#626d93;"></div>
<svg style="left:181.90px;top:14.90px;" width="5" height="5" viewBox="0 0 5 5"><path d="M0.8 4.2L4 1M0.8 4.2h1.4" stroke="#c8c8c8" stroke-width="0.6" fill="none"/></svg>
<svg style="left:189.50px;top:14.90px;" width="5" height="5" viewBox="0 0 5 5"><path d="M0.8 4.2L4 1M0.8 4.2h1.4" stroke="#c8c8c8" stroke-width="0.6" fill="none"/></svg>
<div style="left:197.00px;top:14.30px;width:6.80px;height:6.00px;background:#626d93;"></div>
<svg style="left:198.50px;top:15.50px" width="4.10" height="4.10"><rect x="0.28" y="0.28" width="3.55" height="3.55" rx="0.40" ry="0.40" fill="none" stroke="#c8c8c8" stroke-width="0.55"/></svg>
<div style="left:199.50px;top:17.10px;width:1.80px;height:1.20px;background:#c8c8c8;opacity:.5;"></div>
<svg style="left:207.10px;top:15.50px" width="4.10" height="4.10"><rect x="0.28" y="0.28" width="3.55" height="3.55" rx="0.40" ry="0.40" fill="none" stroke="#c8c8c8" stroke-width="0.55"/></svg>
<div style="left:208.10px;top:17.10px;width:1.80px;height:1.20px;background:#c8c8c8;opacity:.5;"></div>
<div style="left:212.80px;top:14.30px;width:6.80px;height:6.00px;background:#626d93;"></div>
<div style="left:214.20px;top:16.00px;width:4.00px;height:3.00px;background:#c8c8c8;border-radius:0.8px;opacity:.8;"></div>
<svg style="left:221.10px;top:15.50px" width="4.10" height="4.10"><rect x="0.28" y="0.28" width="3.55" height="3.55" rx="0.40" ry="0.40" fill="none" stroke="#c8c8c8" stroke-width="0.55"/></svg>
<div style="left:222.10px;top:17.10px;width:1.80px;height:1.20px;background:#c8c8c8;opacity:.5;"></div>
<svg style="left:226.50px;top:14.90px;" width="5" height="5" viewBox="0 0 5 5"><path d="M0.8 4.2L4 1M0.8 4.2h1.4" stroke="#c8c8c8" stroke-width="0.6" fill="none"/></svg>
<div style="left:234.00px;top:17.20px;width:2.00px;height:0.50px;background:#c8c8c8;"></div>
<svg style="left:237.50px;top:14.90px;" width="5" height="5" viewBox="0 0 5 5"><path d="M0.8 4.2L4 1M0.8 4.2h1.4" stroke="#c8c8c8" stroke-width="0.6" fill="none"/></svg>
<div style="left:244.80px;top:15.20px;width:4.4px;height:4.4px;border-radius:50%;background:#989898;"></div>
<svg style="left:252.10px;top:15.50px" width="4.10" height="4.10"><rect x="0.28" y="0.28" width="3.55" height="3.55" rx="0.40" ry="0.40" fill="none" stroke="#737373" stroke-width="0.55"/></svg>
<div style="left:253.10px;top:17.10px;width:1.80px;height:1.20px;background:#737373;opacity:.5;"></div>
<svg style="left:258.60px;top:15.50px" width="4.10" height="4.10"><rect x="0.28" y="0.28" width="3.55" height="3.55" rx="0.40" ry="0.40" fill="none" stroke="#c8c8c8" stroke-width="0.55"/></svg>
<div style="left:259.60px;top:17.10px;width:1.80px;height:1.20px;background:#c8c8c8;opacity:.5;"></div>
<div style="left:265.00px;top:16.00px;width:4.00px;height:3.00px;background:#737373;border-radius:0.8px;opacity:.8;"></div>
<svg style="left:271.60px;top:15.30px" width="4.50" height="4.50"><rect x="0.28" y="0.28" width="3.95" height="3.95" rx="1.98" ry="1.98" fill="none" stroke="#c8c8c8" stroke-width="0.55"/></svg>
<svg style="left:278.60px;top:15.50px" width="4.10" height="4.10"><rect x="0.28" y="0.28" width="3.55" height="3.55" rx="0.40" ry="0.40" fill="none" stroke="#c8c8c8" stroke-width="0.55"/></svg>
<div style="left:279.60px;top:17.10px;width:1.80px;height:1.20px;background:#c8c8c8;opacity:.5;"></div>
<svg style="left:284.50px;top:14.80px;" width="5.6" height="5.2" viewBox="0 0 5.6 5.2"><path d="M0.6 0.6h4.4v4h-4.4zM0.6 2.6h4.4M2 0.6v4M3.6 0.6v4" stroke="#c8c8c8" stroke-width="0.4" fill="none"/></svg>
<svg style="left:292.10px;top:15.50px" width="4.10" height="4.10"><rect x="0.28" y="0.28" width="3.55" height="3.55" rx="0.40" ry="0.40" fill="none" stroke="#c8c8c8" stroke-width="0.55"/></svg>
<div style="left:293.10px;top:17.10px;width:1.80px;height:1.20px;background:#c8c8c8;opacity:.5;"></div>
<svg style="left:298.20px;top:14.80px;" width="5.6" height="5.2" viewBox="0 0 5.6 5.2"><path d="M0.6 0.6h4.4v4h-4.4zM0.6 2.6h4.4M2 0.6v4M3.6 0.6v4" stroke="#c8c8c8" stroke-width="0.4" fill="none"/></svg>
<svg style="left:307.60px;top:15.50px" width="4.10" height="4.10"><rect x="0.28" y="0.28" width="3.55" height="3.55" rx="0.40" ry="0.40" fill="none" stroke="#c8c8c8" stroke-width="0.55"/></svg>
<div style="left:308.60px;top:17.10px;width:1.80px;height:1.20px;background:#c8c8c8;opacity:.5;"></div>
<svg style="left:314.40px;top:15.50px" width="4.10" height="4.10"><rect x="0.28" y="0.28" width="3.55" height="3.55" rx="0.40" ry="0.40" fill="none" stroke="#c8c8c8" stroke-width="0.55"/></svg>
<div style="left:315.40px;top:17.10px;width:1.80px;height:1.20px;background:#c8c8c8;opacity:.5;"></div>
<svg style="left:322.50px;top:14.90px;" width="5" height="5" viewBox="0 0 5 5"><path d="M0.8 4.2L4 1M0.8 4.2h1.4" stroke="#c8c8c8" stroke-width="0.6" fill="none"/></svg>
<div style="left:330.00px;top:16.00px;width:4.00px;height:3.00px;background:#737373;border-radius:0.8px;opacity:.8;"></div>
<div style="left:336.70px;top:16.00px;width:4.00px;height:3.00px;background:#737373;border-radius:0.8px;opacity:.8;"></div>
<svg style="left:343.00px;top:14.90px;" width="5" height="5" viewBox="0 0 5 5"><path d="M0.8 4.2L4 1M0.8 4.2h1.4" stroke="#c8c8c8" stroke-width="0.6" fill="none"/></svg>
<svg style="left:353.10px;top:15.50px" width="4.10" height="4.10"><rect x="0.28" y="0.28" width="3.55" height="3.55" rx="0.40" ry="0.40" fill="none" stroke="#c8c8c8" stroke-width="0.55"/></svg>
<div style="left:354.10px;top:17.10px;width:1.80px;height:1.20px;background:#c8c8c8;opacity:.5;"></div>
<svg style="left:360.50px;top:14.90px;" width="5" height="5" viewBox="0 0 5 5"><path d="M0.8 4.2L4 1M0.8 4.2h1.4" stroke="#c8c8c8" stroke-width="0.6" fill="none"/></svg>
<svg style="left:366.30px;top:14.90px;" width="5" height="5" viewBox="0 0 5 5"><path d="M0.8 4.2L4 1M0.8 4.2h1.4" stroke="#c8c8c8" stroke-width="0.6" fill="none"/></svg>
<svg style="left:375.10px;top:15.50px" width="4.10" height="4.10"><rect x="0.28" y="0.28" width="3.55" height="3.55" rx="0.40" ry="0.40" fill="none" stroke="#c8c8c8" stroke-width="0.55"/></svg>
<div style="left:376.10px;top:17.10px;width:1.80px;height:1.20px;background:#c8c8c8;opacity:.5;"></div>
<div style="left:380.40px;top:14.30px;width:6.80px;height:6.00px;background:#626d93;"></div>
<svg style="left:381.00px;top:14.80px;" width="5.6" height="5.2" viewBox="0 0 5.6 5.2"><path d="M0.6 0.6h4.4v4h-4.4zM0.6 2.6h4.4M2 0.6v4M3.6 0.6v4" stroke="#c8c8c8" stroke-width="0.4" fill="none"/></svg>
<div style="left:70.00px;top:15.00px;width:0.40px;height:4.60px;background:#3a3a3a;"></div>
<div style="left:97.50px;top:15.00px;width:0.40px;height:4.60px;background:#3a3a3a;"></div>
<div style="left:112.50px;top:15.00px;width:0.40px;height:4.60px;background:#3a3a3a;"></div>
<div style="left:142.00px;top:15.00px;width:0.40px;height:4.60px;background:#3a3a3a;"></div>
<div style="left:150.50px;top:15.00px;width:0.40px;height:4.60px;background:#3a3a3a;"></div>
<div style="left:172.00px;top:15.00px;width:0.40px;height:4.60px;background:#3a3a3a;"></div>
<div style="left:188.50px;top:15.00px;width:0.40px;height:4.60px;background:#3a3a3a;"></div>
<div style="left:196.00px;top:15.00px;width:0.40px;height:4.60px;background:#3a3a3a;"></div>
<div style="left:205.50px;top:15.00px;width:0.40px;height:4.60px;background:#3a3a3a;"></div>
<div style="left:305.50px;top:15.00px;width:0.40px;height:4.60px;background:#3a3a3a;"></div>
<div style="left:320.50px;top:15.00px;width:0.40px;height:4.60px;background:#3a3a3a;"></div>
<div style="left:350.50px;top:15.00px;width:0.40px;height:4.60px;background:#3a3a3a;"></div>
<div style="left:359.50px;top:15.00px;width:0.40px;height:4.60px;background:#3a3a3a;"></div>
<div style="left:373.00px;top:15.00px;width:0.40px;height:4.60px;background:#3a3a3a;"></div>
<div style="left:62.00px;top:21.90px;width:28.20px;height:4.90px;background:#65709a;"></div>
<span style="left:63.50px;top:23.02px;font-size:3.1px;line-height:4.65px;height:4.65px;color:#cfd3e4;">Illustration*</span>
<span style="left:87.00px;top:23.02px;font-size:2.8px;line-height:4.20px;height:4.20px;color:#d8dcea;">x</span>
<svg style="left:92px;top:28.75px" width="411.5" height="370.5"><use href="#art" x="0" y="0" width="411.5" height="370.5"/></svg>
<div style="left:62.00px;top:400.50px;width:471.00px;height:4.50px;background:#4a4a4a;"></div>
<span style="left:63.50px;top:401.02px;font-size:3.2px;line-height:4.80px;height:4.80px;color:#bdbdbd;">14.8</span>
<div style="left:72.00px;top:401.40px;width:24.00px;height:2.60px;background:#3e3e3e;"></div>
<div style="left:120.60px;top:401.00px;width:14.00px;height:3.60px;background:#2d2d2d;"></div>
<span style="left:99.00px;top:401.02px;font-size:3px;line-height:4.50px;height:4.50px;color:#9a9a9a;">•</span>
<span style="left:103.50px;top:401.02px;font-size:3px;line-height:4.50px;height:4.50px;color:#9a9a9a;">•</span>
<span style="left:108.00px;top:401.02px;font-size:3px;line-height:4.50px;height:4.50px;color:#9a9a9a;">•</span>
<span style="left:113.00px;top:401.02px;font-size:3px;line-height:4.50px;height:4.50px;color:#9a9a9a;">•</span>
<span style="left:117.00px;top:401.02px;font-size:3px;line-height:4.50px;height:4.50px;color:#9a9a9a;">•</span>
<span style="left:138.00px;top:401.02px;font-size:3px;line-height:4.50px;height:4.50px;color:#8a8a8a;">◦</span>
<span style="left:141.50px;top:401.02px;font-size:3px;line-height:4.50px;height:4.50px;color:#8a8a8a;">◦</span>
<span style="left:145.00px;top:401.02px;font-size:3px;line-height:4.50px;height:4.50px;color:#8a8a8a;">◦</span>
<span style="left:148.50px;top:401.02px;font-size:3px;line-height:4.50px;height:4.50px;color:#8a8a8a;">◦</span>
<span style="left:152.00px;top:401.02px;font-size:3px;line-height:4.50px;height:4.50px;color:#8a8a8a;">◦</span>
<div style="left:156.00px;top:401.20px;width:374.00px;height:3.00px;background:#464646;"></div>
<div style="left:400.00px;top:401.40px;width:22.00px;height:2.60px;background:#585858;"></div>
<div style="left:530.00px;top:401.60px;width:2.40px;height:2.40px;background:#606060;"></div>
<div style="left:0.00px;top:20.90px;width:15.60px;height:384.10px;background:#3e3e3e;"></div>
<div style="left:15.60px;top:20.90px;width:46.40px;height:384.10px;background:#3f3f3f;"></div>
<div style="left:15.30px;top:20.90px;width:0.50px;height:384.10px;background:#2e2e2e;"></div>
<div style="left:0.00px;top:20.90px;width:62.00px;height:0.40px;background:#2d2d2d;"></div>
<span style="left:1.20px;top:16.02px;font-size:3.5px;line-height:5.25px;height:5.25px;color:#7a7a7a;">«</span>
<span style="left:16.20px;top:16.02px;font-size:3.2px;line-height:4.80px;height:4.80px;color:#7a7a7a;">×</span>
<span style="left:23.00px;top:16.02px;font-size:3.5px;line-height:5.25px;height:5.25px;color:#7a7a7a;">«</span>
<div style="left:4.50px;top:21.40px;width:10.50px;height:5.00px;background:#4d4d4d;"></div>
<div style="left:1.80px;top:22.30px;width:0.50px;height:3.20px;background:#5a5a5a;"></div>
<div style="left:12.60px;top:22.30px;width:0.50px;height:3.20px;background:#5a5a5a;"></div>
<svg style="left:6.50px;top:21.60px;" width="6" height="4.6" viewBox="0 0 6 4.6"><path d="M0.8 4L4.6 0.6" stroke="#e6e6e6" stroke-width="0.9"/></svg>
<svg style="left:4.60px;top:27.00px;" width="6" height="6" viewBox="0 0 6 6"><circle cx="2.5" cy="2.4" r="1.7" stroke="#c2c2c2" stroke-width="0.5" fill="none"/><path d="M3.7 3.7L5.4 5.4" stroke="#c2c2c2" stroke-width="0.55"/></svg>
<svg style="left:4.60px;top:34.50px;" width="6" height="6" viewBox="0 0 6 6"><circle cx="3" cy="3" r="1.9" stroke="#c2c2c2" stroke-width="0.45" fill="none"/><circle cx="4.8" cy="2.8" r="0.7" fill="#c2c2c2"/></svg>
<svg style="left:4.60px;top:42.00px;" width="6" height="6" viewBox="0 0 6 6"><circle cx="2.6" cy="2.4" r="1.7" stroke="#c2c2c2" stroke-width="0.45" fill="none" stroke-dasharray="0.8 0.4"/><rect x="3.2" y="3.2" width="2" height="2.2" fill="#c2c2c2"/></svg>
<svg style="left:4.60px;top:49.30px;" width="6" height="6" viewBox="0 0 6 6"><path d="M3 0.6v4.8M0.6 3h4.8M3 .5l-.7.8M3 .5l.7.8M3 5.5l-.7-.8M3 5.5l.7-.8M.5 3l.8-.7M.5 3l.8.7M5.5 3l-.8-.7M5.5 3l-.8.7" stroke="#c2c2c2" stroke-width="0.4" fill="none"/></svg>
<svg style="left:4.60px;top:56.60px;" width="6" height="6" viewBox="0 0 6 6"><ellipse cx="3.2" cy="2.4" rx="2.2" ry="1.6" stroke="#c2c2c2" stroke-width="0.45" fill="none"/><path d="M1.6 3.6q-.6 1 .2 1.8" stroke="#c2c2c2" stroke-width="0.5" fill="none"/></svg>
<svg style="left:4.60px;top:64.00px;" width="6" height="6" viewBox="0 0 6 6"><path d="M1 5.4L3.6 2.2" stroke="#c2c2c2" stroke-width="0.55"/><path d="M4 .4l.4 1 1 .3-1 .4-.4 1-.4-1-1-.4 1-.3z" fill="#c2c2c2"/></svg>
<svg style="left:4.60px;top:71.30px;" width="6" height="6" viewBox="0 0 6 6"><path d="M1 5.2L3.6 2.4" stroke="#c2c2c2" stroke-width="0.8"/><path d="M3.3 1.6l1.3 1.3 .9-.9a.9 .9 0 0 0-1.3-1.3z" fill="#c2c2c2"/></svg>
<svg style="left:4.60px;top:79.00px;" width="6" height="6" viewBox="0 0 6 6"><path d="M2.4.6l.5 1.4 1.4.5-1.4.5-.5 1.4-.5-1.4-1.4-.5 1.4-.5z" fill="#c2c2c2"/><path d="M3.6 3.8L5.2 5.4" stroke="#c2c2c2" stroke-width="0.55"/></svg>
<svg style="left:4.60px;top:86.30px;" width="6" height="6" viewBox="0 0 6 6"><path d="M1 5.4L2 3.4 4.2 1 5.2 2 3 4.4z" fill="#c2c2c2"/></svg>
<div style="left:4.50px;top:93.40px;width:6.20px;height:6.40px;background:#22d36b;border-radius:0.6px;"></div>
<svg style="left:4.60px;top:93.60px;" width="6" height="6" viewBox="0 0 6 6"><path d="M1.2 5L3.2 2.6 4.6 1.2" stroke="#e9fff1" stroke-width="0.8"/><path d="M3.8 3.8l1.6 1.4" stroke="#0c7a3a" stroke-width="0.5"/></svg>
<svg style="left:4.60px;top:101.00px;" width="6" height="6" viewBox="0 0 6 6"><path d="M1 5.4q.2-1.6 1.4-2L4.6.8l.7.7-2.5 2.4q-.2 1.2-1.8 1.5z" fill="#c2c2c2"/></svg>
<svg style="left:4.60px;top:108.20px;" width="6" height="6" viewBox="0 0 6 6"><path d="M1.2 5.4L3.4 3" stroke="#c2c2c2" stroke-width="0.8"/><circle cx="3.8" cy="1.6" r="0.6" fill="#c2c2c2"/><circle cx="5" cy="2.6" r="0.4" fill="#c2c2c2"/><circle cx="2.6" cy="1" r="0.4" fill="#c2c2c2"/></svg>
<div style="left:4.60px;top:115.50px;width:6.00px;height:6.00px;background:#f1f1f1;border-radius:0.5px;"></div>
<svg style="left:4.60px;top:115.50px;" width="6" height="6" viewBox="0 0 6 6"><path d="M3 1l.6 1.4 1.4.6-1.4.6L3 5l-.6-1.4L1 3l1.4-.6z" fill="#444"/></svg>
<svg style="left:4.60px;top:122.90px;" width="6" height="6" viewBox="0 0 6 6"><path d="M1.4 3.4Q3 .2 4.6 3.4v1.4H1.4z" fill="#ff6aa0"/><rect x="1.2" y="4.4" width="3.6" height="1.2" fill="#ffd36a"/></svg>
<svg style="left:4.60px;top:130.20px;" width="6" height="6" viewBox="0 0 6 6"><rect x="0.8" y="1.4" width="4.4" height="3.2" rx="0.6" stroke="#c2c2c2" stroke-width="0.45" fill="none"/><path d="M.8 3h4.4" stroke="#c2c2c2" stroke-width="0.5"/></svg>
<svg style="left:4.60px;top:138.40px;" width="6" height="6" viewBox="0 0 6 6"><defs><linearGradient id="gg"><stop offset="0" stop-color="#eee"/><stop offset="1" stop-color="#555"/></linearGradient></defs><rect x="0.8" y="1" width="4.4" height="4" fill="url(#gg)"/></svg>
<svg style="left:4.60px;top:145.60px;" width="6" height="6" viewBox="0 0 6 6"><path d="M.8 5.2L5.2.8" stroke="#c2c2c2" stroke-width="0.5"/></svg>
<svg style="left:4.60px;top:153.00px;" width="6" height="6" viewBox="0 0 6 6"><rect x="0.9" y="0.9" width="4.2" height="4.2" rx="0.5" stroke="#c2c2c2" stroke-width="0.5" fill="none"/><path d="M.9 2.6h4.2" stroke="#c2c2c2" stroke-width="0.5"/></svg>
<svg style="left:4.60px;top:160.30px;" width="6" height="6" viewBox="0 0 6 6"><path d="M.8.8h4.6L.8 5.4z" stroke="#c2c2c2" stroke-width="0.55" fill="none"/></svg>
<span style="left:5.50px;top:165.96px;font-size:6.2px;line-height:9.30px;height:9.30px;color:#dcdcdc;">A</span>
<svg style="left:4.60px;top:175.00px;" width="6" height="6" viewBox="0 0 6 6"><path d="M1 .8l3.6 2.2L1 5.2" stroke="#8a8a8a" stroke-width="0.5" fill="none"/></svg>
<svg style="left:4.60px;top:182.30px;" width="6" height="6" viewBox="0 0 6 6"><path d="M.8 5.2q1.4-.2 2-1.4L5 .8" stroke="#c2c2c2" stroke-width="0.55" fill="none"/><path d="M.6 5.6h3" stroke="#c2c2c2" stroke-width="0.5"/></svg>
<div style="left:2.00px;top:78.40px;width:11.50px;height:0.50px;background:#5c5c5c;"></div>
<div style="left:2.00px;top:137.60px;width:11.50px;height:0.50px;background:#5c5c5c;"></div>
<div style="left:0.00px;top:188.60px;width:15.30px;height:15.40px;background:#484848;"></div>
<div style="left:7.00px;top:195.20px;width:7.80px;height:8.20px;background:#5a6288;"></div>
<div style="left:7.60px;top:195.80px;width:6.60px;height:7.00px;background:#8a2a1c;"></div>
<div style="left:0.90px;top:189.80px;width:7.20px;height:7.00px;background:#f4f4f4;"></div>
<div style="left:1.2px;top:205.2px;width:12.8px;height:2.6px;background:repeating-conic-gradient(#fff 0 25%,#9a9a9a 0 50%) 0 0/1.6px 1.6px;"></div>
<div style="left:16.00px;top:20.90px;width:46.00px;height:4.90px;background:#3b3b3b;"></div>
<div style="left:17.80px;top:20.90px;width:21.30px;height:4.90px;background:#4e4e4e;"></div>
<div style="left:16.80px;top:21.80px;width:0.50px;height:3.00px;background:#666;"></div>
<svg style="left:22.00px;top:21.40px;" width="5" height="4" viewBox="0 0 5 4"><path d="M.6 3.6L3.6.6l.8 3z" stroke="#ddd" stroke-width="0.5" fill="none"/></svg>
<span style="left:28.50px;top:22.02px;font-size:2.9px;line-height:4.35px;height:4.35px;color:#a9a9a9;">Sub Tool</span>
<div style="left:16.20px;top:26.70px;width:22.30px;height:6.50px;background:#494949;"></div>
<svg style="left:16.80px;top:27.30px;" width="5.4" height="5.4" viewBox="0 0 5.4 5.4"><path d="M.8 4.8L2 2.6 3.8.9l.9.9-1.9 1.8z" fill="#dedede"/><path d="M3 .8h2" stroke="#dedede" stroke-width="0.5"/></svg>
<span style="left:23.20px;top:28.02px;font-size:3.4px;line-height:5.10px;height:5.10px;color:#d2d2d2;width:15.00px;clip-path:inset(-1px 0 -1px 0);">Cyr</span>
<div style="left:39.10px;top:26.70px;width:22.30px;height:6.50px;background:#494949;"></div>
<svg style="left:39.70px;top:27.30px;" width="5.4" height="5.4" viewBox="0 0 5.4 5.4"><path d="M.8 4.8L2 2.6 3.8.9l.9.9-1.9 1.8z" fill="#dedede"/><path d="M3 .8h2" stroke="#dedede" stroke-width="0.5"/></svg>
<span style="left:46.10px;top:28.02px;font-size:3.4px;line-height:5.10px;height:5.10px;color:#d2d2d2;width:15.00px;clip-path:inset(-1px 0 -1px 0);">Cy HB</span>
<div style="left:16.20px;top:34.22px;width:22.30px;height:6.50px;background:#494949;"></div>
<div style="left:16.60px;top:34.72px;width:5.60px;height:5.60px;background:#e9dcae;"></div>
<span style="left:23.20px;top:36.02px;font-size:3.4px;line-height:5.10px;height:5.10px;color:#d2d2d2;width:15.00px;clip-path:inset(-1px 0 -1px 0);">Cyr2</span>
<div style="left:39.10px;top:34.22px;width:22.30px;height:6.50px;background:#494949;"></div>
<div style="left:39.50px;top:34.72px;width:5.60px;height:5.60px;background:#e3b890;"></div>
<div style="left:40.3px;top:35.519999999999996px;width:4px;height:4px;background:repeating-conic-gradient(#b47a5a 0 25%,#f2d2b8 0 50%) 0 0/1.4px 1.4px;"></div>
<span style="left:46.10px;top:36.02px;font-size:3.4px;line-height:5.10px;height:5.10px;color:#d2d2d2;width:15.00px;clip-path:inset(-1px 0 -1px 0);">K.BiiB 1/1</span>
<div style="left:16.20px;top:41.74px;width:22.30px;height:6.50px;background:#494949;"></div>
<div style="left:16.60px;top:42.24px;width:5.60px;height:5.60px;background:#d8bb1e;"></div>
<span style="left:23.20px;top:43.02px;font-size:3.4px;line-height:5.10px;height:5.10px;color:#d2d2d2;width:15.00px;clip-path:inset(-1px 0 -1px 0);">Spench/1</span>
<div style="left:39.10px;top:41.74px;width:22.30px;height:6.50px;background:#494949;"></div>
<svg style="left:39.70px;top:42.34px;" width="5.4" height="5.4" viewBox="0 0 5.4 5.4"><path d="M.8 4.8L2 2.6 3.8.9l.9.9-1.9 1.8z" fill="#dedede"/><path d="M3 .8h2" stroke="#dedede" stroke-width="0.5"/></svg>
<span style="left:46.10px;top:43.02px;font-size:3.4px;line-height:5.10px;height:5.10px;color:#d2d2d2;width:15.00px;clip-path:inset(-1px 0 -1px 0);">Sketches</span>
<div style="left:16.20px;top:49.26px;width:22.30px;height:6.50px;background:#5f6b92;"></div>
<svg style="left:16.80px;top:49.86px;" width="5.4" height="5.4" viewBox="0 0 5.4 5.4"><path d="M.8 4.8L2 2.6 3.8.9l.9.9-1.9 1.8z" fill="#dedede"/><path d="M3 .8h2" stroke="#dedede" stroke-width="0.5"/></svg>
<span style="left:23.20px;top:51.02px;font-size:3.4px;line-height:5.10px;height:5.10px;color:#d2d2d2;width:15.00px;clip-path:inset(-1px 0 -1px 0);">Splatter</span>
<div style="left:39.10px;top:49.26px;width:22.30px;height:6.50px;background:#494949;"></div>
<svg style="left:39.70px;top:49.86px;" width="5.4" height="5.4" viewBox="0 0 5.4 5.4"><path d="M.8 4.8L2 2.6 3.8.9l.9.9-1.9 1.8z" fill="#dedede"/><path d="M3 .8h2" stroke="#dedede" stroke-width="0.5"/></svg>
<span style="left:46.10px;top:51.02px;font-size:3.4px;line-height:5.10px;height:5.10px;color:#d2d2d2;width:15.00px;clip-path:inset(-1px 0 -1px 0);">Smoke Kk</span>
<div style="left:16.20px;top:56.78px;width:22.30px;height:6.50px;background:#494949;"></div>
<svg style="left:16.80px;top:57.38px;" width="5.4" height="5.4" viewBox="0 0 5.4 5.4"><path d="M.8 4.8L2 2.6 3.8.9l.9.9-1.9 1.8z" fill="#dedede"/><path d="M3 .8h2" stroke="#dedede" stroke-width="0.5"/></svg>
<span style="left:23.20px;top:59.02px;font-size:3.4px;line-height:5.10px;height:5.10px;color:#d2d2d2;width:15.00px;clip-path:inset(-1px 0 -1px 0);">1 Checks</span>
<div style="left:39.10px;top:56.78px;width:22.30px;height:6.50px;background:#494949;"></div>
<svg style="left:39.70px;top:57.38px;" width="5.4" height="5.4" viewBox="0 0 5.4 5.4"><path d="M.8 4.8L2 2.6 3.8.9l.9.9-1.9 1.8z" fill="#dedede"/><path d="M3 .8h2" stroke="#dedede" stroke-width="0.5"/></svg>
<span style="left:46.10px;top:59.02px;font-size:3.4px;line-height:5.10px;height:5.10px;color:#d2d2d2;width:15.00px;clip-path:inset(-1px 0 -1px 0);">Real G-Pen</span>
<div style="left:16.00px;top:64.60px;width:43.50px;height:137.60px;background:#3f3f3f;"></div>
<div style="left:59.40px;top:64.60px;width:2.20px;height:137.60px;background:#4a4a4a;"></div>
<div style="left:59.70px;top:66.00px;width:1.60px;height:3.00px;background:#707070;"></div>
<div style="left:16.00px;top:72.00px;width:43.40px;height:0.35px;background:#383838;"></div>
<svg style="left:20.00px;top:65.40px;" width="30" height="7" viewBox="0 0 30 7"><path d="M1.5 2.2Q6 .4 10.5 2.6T21 4.2" stroke="url(#bsg)" stroke-width="3.60" fill="none" stroke-linecap="round" opacity="0.26"/><path d="M1.5 2.2Q6 .4 10.5 2.6T21 4.2" stroke="url(#bsg)" stroke-width="2.00" fill="none" stroke-linecap="round" opacity="0.85"/></svg>
<span style="left:16.50px;top:67.02px;font-size:3.4px;line-height:5.10px;height:5.10px;color:#c6c6c6;width:41.50px;text-align:right;clip-path:inset(-1px 0 -1px 0);">Soft Feather 2</span>
<div style="left:16.00px;top:78.95px;width:43.40px;height:0.35px;background:#383838;"></div>
<span style="left:16.50px;top:74.02px;font-size:3.4px;line-height:5.10px;height:5.10px;color:#c6c6c6;width:41.50px;text-align:right;clip-path:inset(-1px 0 -1px 0);">PAINT - Flat Bristle Sharp 3</span>
<div style="left:16.00px;top:85.90px;width:43.40px;height:0.35px;background:#383838;"></div>
<svg style="left:20.00px;top:79.30px;" width="30" height="7" viewBox="0 0 30 7"><path d="M1.5 2.2Q6 .4 7.5 2.6T15 4.2" stroke="url(#bsg)" stroke-width="1.26" fill="none" stroke-linecap="round" opacity="0.24"/><path d="M1.5 2.2Q6 .4 7.5 2.6T15 4.2" stroke="url(#bsg)" stroke-width="0.70" fill="none" stroke-linecap="round" opacity="0.80"/></svg>
<span style="left:16.50px;top:81.02px;font-size:3.4px;line-height:5.10px;height:5.10px;color:#c6c6c6;width:41.50px;text-align:right;clip-path:inset(-1px 0 -1px 0);">DRAW - Loose 3</span>
<div style="left:16.00px;top:92.85px;width:43.40px;height:0.35px;background:#383838;"></div>
<svg style="left:20.00px;top:86.25px;" width="30" height="7" viewBox="0 0 30 7"><path d="M1.5 2.2Q6 .4 6.0 2.6T12 4.2" stroke="url(#bsg)" stroke-width="1.26" fill="none" stroke-linecap="round" opacity="0.22"/><path d="M1.5 2.2Q6 .4 6.0 2.6T12 4.2" stroke="url(#bsg)" stroke-width="0.70" fill="none" stroke-linecap="round" opacity="0.75"/></svg>
<span style="left:16.50px;top:88.02px;font-size:3.4px;line-height:5.10px;height:5.10px;color:#c6c6c6;width:41.50px;text-align:right;clip-path:inset(-1px 0 -1px 0);">Den.Spon 1800 2</span>
<div style="left:16.00px;top:99.80px;width:43.40px;height:0.35px;background:#383838;"></div>
<svg style="left:20.00px;top:93.20px;" width="30" height="7" viewBox="0 0 30 7"><path d="M1.5 2.2Q6 .4 7.0 2.6T14 4.2" stroke="url(#bsg)" stroke-width="1.62" fill="none" stroke-linecap="round" opacity="0.09"/><path d="M1.5 2.2Q6 .4 7.0 2.6T14 4.2" stroke="url(#bsg)" stroke-width="0.90" fill="none" stroke-linecap="round" opacity="0.30"/></svg>
<span style="left:16.50px;top:95.02px;font-size:3.4px;line-height:5.10px;height:5.10px;color:#c6c6c6;width:41.50px;text-align:right;clip-path:inset(-1px 0 -1px 0);">PAINT - Textured Square 2</span>
<div style="left:16.00px;top:106.75px;width:43.40px;height:0.35px;background:#383838;"></div>
<span style="left:16.50px;top:102.02px;font-size:3.4px;line-height:5.10px;height:5.10px;color:#c6c6c6;width:41.50px;text-align:right;clip-path:inset(-1px 0 -1px 0);">RAKE - Sumi 2</span>
<div style="left:16.00px;top:113.70px;width:43.40px;height:0.35px;background:#383838;"></div>
<span style="left:16.50px;top:109.02px;font-size:3.4px;line-height:5.10px;height:5.10px;color:#c6c6c6;width:41.50px;text-align:right;clip-path:inset(-1px 0 -1px 0);">RAKE - Cloth Folds 2</span>
<div style="left:16.00px;top:120.65px;width:43.40px;height:0.35px;background:#383838;"></div>
<svg style="left:20.00px;top:114.05px;" width="30" height="7" viewBox="0 0 30 7"><path d="M1.5 2.2Q6 .4 8.0 2.6T16 4.2" stroke="url(#bsg)" stroke-width="2.70" fill="none" stroke-linecap="round" opacity="0.26"/><path d="M1.5 2.2Q6 .4 8.0 2.6T16 4.2" stroke="url(#bsg)" stroke-width="1.50" fill="none" stroke-linecap="round" opacity="0.85"/></svg>
<span style="left:16.50px;top:116.02px;font-size:3.4px;line-height:5.10px;height:5.10px;color:#c6c6c6;width:41.50px;text-align:right;clip-path:inset(-1px 0 -1px 0);">soft strokes 2</span>
<div style="left:16.00px;top:127.60px;width:43.40px;height:0.35px;background:#383838;"></div>
<svg style="left:20.00px;top:121.00px;" width="30" height="7" viewBox="0 0 30 7"><path d="M1.5 2.2Q6 .4 6.0 2.6T12 4.2" stroke="url(#bsg)" stroke-width="1.44" fill="none" stroke-linecap="round" opacity="0.09"/><path d="M1.5 2.2Q6 .4 6.0 2.6T12 4.2" stroke="url(#bsg)" stroke-width="0.80" fill="none" stroke-linecap="round" opacity="0.30"/></svg>
<span style="left:16.50px;top:123.02px;font-size:3.4px;line-height:5.10px;height:5.10px;color:#c6c6c6;width:41.50px;text-align:right;clip-path:inset(-1px 0 -1px 0);">DRAW - Pencil Black 2</span>
<div style="left:16.00px;top:134.55px;width:43.40px;height:0.35px;background:#383838;"></div>
<svg style="left:20.00px;top:127.95px;" width="30" height="7" viewBox="0 0 30 7"><path d="M1.5 2.2Q6 .4 7.5 2.6T15 4.2" stroke="url(#bsg)" stroke-width="1.62" fill="none" stroke-linecap="round" opacity="0.26"/><path d="M1.5 2.2Q6 .4 7.5 2.6T15 4.2" stroke="url(#bsg)" stroke-width="0.90" fill="none" stroke-linecap="round" opacity="0.85"/></svg>
<span style="left:16.50px;top:130.02px;font-size:3.4px;line-height:5.10px;height:5.10px;color:#c6c6c6;width:41.50px;text-align:right;clip-path:inset(-1px 0 -1px 0);">Pencil R1</span>
<div style="left:16.00px;top:141.50px;width:43.40px;height:0.35px;background:#383838;"></div>
<span style="left:16.50px;top:137.02px;font-size:3.4px;line-height:5.10px;height:5.10px;color:#c6c6c6;width:41.50px;text-align:right;clip-path:inset(-1px 0 -1px 0);">PAINT - Wet Textured</span>
<div style="left:16.00px;top:148.45px;width:43.40px;height:0.35px;background:#383838;"></div>
<svg style="left:20.00px;top:141.85px;" width="30" height="7" viewBox="0 0 30 7"><path d="M1.5 2.2Q6 .4 8.5 2.6T17 4.2" stroke="url(#bsg)" stroke-width="1.98" fill="none" stroke-linecap="round" opacity="0.24"/><path d="M1.5 2.2Q6 .4 8.5 2.6T17 4.2" stroke="url(#bsg)" stroke-width="1.10" fill="none" stroke-linecap="round" opacity="0.80"/></svg>
<span style="left:16.50px;top:144.02px;font-size:3.4px;line-height:5.10px;height:5.10px;color:#c6c6c6;width:41.50px;text-align:right;clip-path:inset(-1px 0 -1px 0);">rougher brush 2</span>
<div style="left:16.00px;top:148.60px;width:43.40px;height:6.80px;background:#5f6b92;"></div>
<div style="left:16.00px;top:155.40px;width:43.40px;height:0.35px;background:#383838;"></div>
<svg style="left:20.00px;top:148.80px;" width="30" height="7" viewBox="0 0 30 7"><path d="M1.5 2.2Q6 .4 7.0 2.6T14 4.2" stroke="url(#bsg)" stroke-width="1.26" fill="none" stroke-linecap="round" opacity="0.27"/><path d="M1.5 2.2Q6 .4 7.0 2.6T14 4.2" stroke="url(#bsg)" stroke-width="0.70" fill="none" stroke-linecap="round" opacity="0.90"/></svg>
<span style="left:16.50px;top:151.02px;font-size:3.4px;line-height:5.10px;height:5.10px;color:#c6c6c6;width:41.50px;text-align:right;clip-path:inset(-1px 0 -1px 0);">Pencil, 4b 2 *</span>
<div style="left:16.00px;top:162.35px;width:43.40px;height:0.35px;background:#383838;"></div>
<span style="left:16.50px;top:157.02px;font-size:3.4px;line-height:5.10px;height:5.10px;color:#c6c6c6;width:41.50px;text-align:right;clip-path:inset(-1px 0 -1px 0);">Reborn Highlight pen *</span>
<div style="left:16.00px;top:169.30px;width:43.40px;height:0.35px;background:#383838;"></div>
<svg style="left:17.00px;top:163.30px;" width="6" height="5.2" viewBox="0 0 6 5.2"><ellipse cx="2.6" cy="2.6" rx="2.2" ry="1.9" fill="#8a8a8a"/></svg>
<span style="left:16.50px;top:164.02px;font-size:3.4px;line-height:5.10px;height:5.10px;color:#c6c6c6;width:41.50px;text-align:right;clip-path:inset(-1px 0 -1px 0);">Lasso fill</span>
<div style="left:16.00px;top:176.25px;width:43.40px;height:0.35px;background:#383838;"></div>
<svg style="left:20.00px;top:169.65px;" width="30" height="7" viewBox="0 0 30 7"><path d="M1.5 2.2Q6 .4 10.5 2.6T21 4.2" stroke="url(#bsg)" stroke-width="3.60" fill="none" stroke-linecap="round" opacity="0.26"/><path d="M1.5 2.2Q6 .4 10.5 2.6T21 4.2" stroke="url(#bsg)" stroke-width="2.00" fill="none" stroke-linecap="round" opacity="0.85"/></svg>
<span style="left:16.50px;top:171.02px;font-size:3.4px;line-height:5.10px;height:5.10px;color:#c6c6c6;width:41.50px;text-align:right;clip-path:inset(-1px 0 -1px 0);">Bong pen</span>
<div style="left:16.00px;top:183.20px;width:43.40px;height:0.35px;background:#383838;"></div>
<svg style="left:20.00px;top:176.60px;" width="30" height="7" viewBox="0 0 30 7"><path d="M1.5 2.2Q6 .4 12.5 2.6T25 4.2" stroke="url(#bsg)" stroke-width="4.32" fill="none" stroke-linecap="round" opacity="0.27"/><path d="M1.5 2.2Q6 .4 12.5 2.6T25 4.2" stroke="url(#bsg)" stroke-width="2.40" fill="none" stroke-linecap="round" opacity="0.90"/></svg>
<span style="left:16.50px;top:178.02px;font-size:3.4px;line-height:5.10px;height:5.10px;color:#c6c6c6;width:41.50px;text-align:right;clip-path:inset(-1px 0 -1px 0);">G-Oh</span>
<div style="left:16.00px;top:190.15px;width:43.40px;height:0.35px;background:#383838;"></div>
<svg style="left:20.00px;top:183.55px;" width="30" height="7" viewBox="0 0 30 7"><path d="M1.5 2.2Q6 .4 8.0 2.6T16 4.2" stroke="url(#bsg)" stroke-width="1.26" fill="none" stroke-linecap="round" opacity="0.14"/><path d="M1.5 2.2Q6 .4 8.0 2.6T16 4.2" stroke="url(#bsg)" stroke-width="0.70" fill="none" stroke-linecap="round" opacity="0.45"/></svg>
<span style="left:16.50px;top:185.02px;font-size:3.4px;line-height:5.10px;height:5.10px;color:#c6c6c6;width:41.50px;text-align:right;clip-path:inset(-1px 0 -1px 0);">Sfuma Cenimating 2 *</span>
<div style="left:16.00px;top:197.10px;width:43.40px;height:0.35px;background:#383838;"></div>
<svg style="left:20.00px;top:190.50px;" width="30" height="7" viewBox="0 0 30 7"><path d="M1.5 2.2Q6 .4 6.0 2.6T12 4.2" stroke="url(#bsg)" stroke-width="0.90" fill="none" stroke-linecap="round" opacity="0.09"/><path d="M1.5 2.2Q6 .4 6.0 2.6T12 4.2" stroke="url(#bsg)" stroke-width="0.50" fill="none" stroke-linecap="round" opacity="0.30"/></svg>
<span style="left:16.50px;top:192.02px;font-size:3.4px;line-height:5.10px;height:5.10px;color:#c6c6c6;width:41.50px;text-align:right;clip-path:inset(-1px 0 -1px 0);">14 Graphite Powder</span>
<div style="left:16.00px;top:204.05px;width:43.40px;height:0.35px;background:#383838;"></div>
<svg style="left:20.00px;top:197.45px;" width="30" height="7" viewBox="0 0 30 7"><path d="M1.5 2.2Q6 .4 10.0 2.6T20 4.2" stroke="url(#bsg)" stroke-width="2.88" fill="none" stroke-linecap="round" opacity="0.24"/><path d="M1.5 2.2Q6 .4 10.0 2.6T20 4.2" stroke="url(#bsg)" stroke-width="1.60" fill="none" stroke-linecap="round" opacity="0.80"/></svg>
<span style="left:16.50px;top:199.02px;font-size:3.4px;line-height:5.10px;height:5.10px;color:#c6c6c6;width:41.50px;text-align:right;clip-path:inset(-1px 0 -1px 0);">Writing Pencil</span>
<div style="left:16.00px;top:202.30px;width:46.00px;height:6.00px;background:#3c3c3c;"></div>
<svg style="left:16.50px;top:203.00px;" width="5" height="5" viewBox="0 0 5 5"><rect x=".6" y=".6" width="2.6" height="3" stroke="#bbb" stroke-width=".5" fill="none"/><rect x="1.8" y="1.6" width="2.6" height="3" stroke="#bbb" stroke-width=".5" fill="#3c3c3c"/></svg>
<svg style="left:46.50px;top:203.20px" width="4.00" height="4.20"><rect x="0.25" y="0.25" width="3.50" height="3.70" rx="0.50" ry="0.50" fill="none" stroke="#8a8a8a" stroke-width="0.5"/></svg>
<svg style="left:52.00px;top:203.20px" width="4.00" height="4.20"><rect x="0.25" y="0.25" width="3.50" height="3.70" rx="0.50" ry="0.50" fill="none" stroke="#8a8a8a" stroke-width="0.5"/></svg>
<svg style="left:57.50px;top:203.20px" width="4.00" height="4.20"><rect x="0.25" y="0.25" width="3.50" height="3.70" rx="0.50" ry="0.50" fill="none" stroke="#8a8a8a" stroke-width="0.5"/></svg>
<div style="left:15.60px;top:208.30px;width:46.40px;height:197.00px;background:#404040;"></div>
<div style="left:15.60px;top:208.30px;width:46.40px;height:0.40px;background:#2e2e2e;"></div>
<div style="left:20.50px;top:208.80px;width:27.00px;height:4.60px;background:#4a4a4a;"></div>
<div style="left:17.60px;top:209.60px;width:0.50px;height:3.00px;background:#666;"></div>
<svg style="left:22.00px;top:209.20px;" width="4" height="4" viewBox="0 0 4 4"><path d="M.6 3.4L3.2.6" stroke="#ddd" stroke-width="0.7"/></svg>
<span style="left:28.00px;top:210.02px;font-size:2.9px;line-height:4.35px;height:4.35px;color:#a6a6a6;">Tool Property</span>
<div style="left:47.50px;top:209.40px;width:4.60px;height:3.40px;background:#545454;"></div>
<div style="left:16.00px;top:213.90px;width:23.00px;height:10.80px;background:#c6c6c6;"></div>
<div style="left:16.00px;top:213.90px;width:17.00px;height:3.60px;background:#e4e4e4;"></div>
<span style="left:16.60px;top:215.02px;font-size:3.1px;line-height:4.65px;height:4.65px;color:#555;">Pencil, 4b 2</span>
<svg style="left:32.00px;top:214.00px;" width="20" height="9" viewBox="0 0 20 9"><path d="M1.5 2.6Q5 5.2 9 6.2T15 7" stroke="#7d2a22" stroke-width="0.6" fill="none"/><path d="M1.5 2.6Q3.4 4 5.4 5" stroke="#c02626" stroke-width="0.9" fill="none"/></svg>
<div style="left:55.90px;top:219.10px;width:5.30px;height:5.60px;background:#6d78a2;"></div>
<span style="left:20.00px;top:227.02px;font-size:3.4px;line-height:5.10px;height:5.10px;color:#d0d0d0;">Brush Size</span>
<div style="left:26.00px;top:230.20px;width:11.00px;height:2.00px;background:#5a5a5a;"></div>
<div style="left:26.00px;top:230.20px;width:5.00px;height:2.00px;background:#6a6a6a;"></div>
<span style="left:42.50px;top:228.02px;font-size:3.4px;line-height:5.10px;height:5.10px;color:#d8d8d8;width:7.50px;text-align:right;clip-path:inset(-1px 0 -1px 0);">20.0</span>
<svg style="left:50.20px;top:227.80px;" width="2.4" height="4.6" viewBox="0 0 2.4 4.6"><path d="M.4 1.6L1.2.6 2 1.6M.4 3L1.2 4 2 3" stroke="#aaa" stroke-width=".4" fill="none"/></svg>
<div style="left:54.00px;top:227.00px;width:3.80px;height:5.40px;background:#5b5b5b;"></div>
<span style="left:54.80px;top:228.02px;font-size:2px;line-height:3.00px;height:3.00px;color:#bbb;">▲</span>
<span style="left:20.00px;top:236.02px;font-size:3.4px;line-height:5.10px;height:5.10px;color:#d0d0d0;">Opacity</span>
<div style="left:26.00px;top:239.30px;width:11.00px;height:2.00px;background:#5a5a5a;"></div>
<div style="left:26.00px;top:239.30px;width:5.00px;height:2.00px;background:#6a6a6a;"></div>
<span style="left:42.50px;top:237.02px;font-size:3.4px;line-height:5.10px;height:5.10px;color:#d8d8d8;width:7.50px;text-align:right;clip-path:inset(-1px 0 -1px 0);">100</span>
<svg style="left:50.20px;top:236.90px;" width="2.4" height="4.6" viewBox="0 0 2.4 4.6"><path d="M.4 1.6L1.2.6 2 1.6M.4 3L1.2 4 2 3" stroke="#aaa" stroke-width=".4" fill="none"/></svg>
<div style="left:54.00px;top:236.10px;width:3.80px;height:5.40px;background:#5b5b5b;"></div>
<span style="left:54.80px;top:237.02px;font-size:2px;line-height:3.00px;height:3.00px;color:#bbb;">▲</span>
<div style="left:17.00px;top:243.60px;width:43.00px;height:0.35px;background:#494949;"></div>
<span style="left:20.00px;top:247.02px;font-size:3.2px;line-height:4.80px;height:4.80px;color:#bdbdbd;">Anti-alias</span>
<div style="left:33.00px;top:245.20px;width:25.00px;height:6.20px;background:#4d4d4d;"></div>
<div style="left:37.80px;top:245.20px;width:6.20px;height:6.20px;background:#7f8bb6;"></div>
<div style="left:33.9px;top:246.8px;width:3px;height:3px;border-radius:50%;background:#b4b4b4;"></div>
<div style="left:39.4px;top:246.8px;width:3px;height:3px;border-radius:50%;background:#b4b4b4;"></div>
<div style="left:44.9px;top:246.8px;width:3px;height:3px;border-radius:50%;background:#b4b4b4;"></div>
<div style="left:50.1px;top:246.8px;width:3px;height:3px;border-radius:50%;background:#b4b4b4;"></div>
<svg style="left:55.20px;top:247.37px" width="1.86" height="1.86"><path d="M0.2 0.46L0.93 1.40L1.66 0.46" stroke="#bbb" stroke-width="0.45" fill="none"/></svg>
<div style="left:17.00px;top:252.60px;width:43.00px;height:0.35px;background:#494949;"></div>
<span style="left:20.00px;top:256.02px;font-size:3.2px;line-height:4.80px;height:4.80px;color:#777;">Hardness</span>
<svg style="left:34.00px;top:255.60px" width="4.20" height="4.00"><rect x="0.20" y="0.20" width="3.80" height="3.60" rx="0.00" ry="0.00" fill="none" stroke="#5a5a5a" stroke-width="0.4"/></svg>
<svg style="left:39.50px;top:255.60px" width="4.20" height="4.00"><rect x="0.20" y="0.20" width="3.80" height="3.60" rx="0.00" ry="0.00" fill="none" stroke="#5a5a5a" stroke-width="0.4"/></svg>
<svg style="left:45.00px;top:255.60px" width="4.20" height="4.00"><rect x="0.20" y="0.20" width="3.80" height="3.60" rx="0.00" ry="0.00" fill="none" stroke="#5a5a5a" stroke-width="0.4"/></svg>
<svg style="left:50.50px;top:255.60px" width="4.20" height="4.00"><rect x="0.20" y="0.20" width="3.80" height="3.60" rx="0.00" ry="0.00" fill="none" stroke="#5a5a5a" stroke-width="0.4"/></svg>
<div style="left:17.00px;top:260.60px;width:43.00px;height:0.35px;background:#494949;"></div>
<span style="left:20.00px;top:263.02px;font-size:3.4px;line-height:5.10px;height:5.10px;color:#d0d0d0;">Angle</span>
<div style="left:26.00px;top:266.20px;width:11.00px;height:2.00px;background:#5a5a5a;"></div>
<div style="left:26.00px;top:266.20px;width:5.00px;height:2.00px;background:#6a6a6a;"></div>
<span style="left:42.50px;top:264.02px;font-size:3.4px;line-height:5.10px;height:5.10px;color:#d8d8d8;width:7.50px;text-align:right;clip-path:inset(-1px 0 -1px 0);">200.0</span>
<svg style="left:50.20px;top:263.80px;" width="2.4" height="4.6" viewBox="0 0 2.4 4.6"><path d="M.4 1.6L1.2.6 2 1.6M.4 3L1.2 4 2 3" stroke="#aaa" stroke-width=".4" fill="none"/></svg>
<div style="left:54.00px;top:263.00px;width:3.80px;height:5.40px;background:#5b5b5b;"></div>
<span style="left:54.80px;top:264.02px;font-size:2px;line-height:3.00px;height:3.00px;color:#bbb;">▲</span>
<span style="left:20.00px;top:272.02px;font-size:3.4px;line-height:5.10px;height:5.10px;color:#d0d0d0;">Brush density</span>
<div style="left:26.00px;top:275.80px;width:11.00px;height:2.00px;background:#5a5a5a;"></div>
<div style="left:26.00px;top:275.80px;width:5.00px;height:2.00px;background:#6a6a6a;"></div>
<span style="left:42.50px;top:274.02px;font-size:3.4px;line-height:5.10px;height:5.10px;color:#d8d8d8;width:7.50px;text-align:right;clip-path:inset(-1px 0 -1px 0);">100</span>
<svg style="left:50.20px;top:273.40px;" width="2.4" height="4.6" viewBox="0 0 2.4 4.6"><path d="M.4 1.6L1.2.6 2 1.6M.4 3L1.2 4 2 3" stroke="#aaa" stroke-width=".4" fill="none"/></svg>
<div style="left:54.00px;top:272.60px;width:3.80px;height:5.40px;background:#5b5b5b;"></div>
<span style="left:54.80px;top:274.02px;font-size:2px;line-height:3.00px;height:3.00px;color:#bbb;">▲</span>
<div style="left:17.00px;top:280.40px;width:43.00px;height:0.35px;background:#494949;"></div>
<svg style="left:16.60px;top:283.40px" width="3.30" height="3.30"><rect x="0.23" y="0.23" width="2.85" height="2.85" rx="0.00" ry="0.00" fill="none" stroke="#909090" stroke-width="0.45"/></svg>
<span style="left:20.00px;top:283.02px;font-size:3.4px;line-height:5.10px;height:5.10px;color:#d0d0d0;">Gap</span>
<div style="left:33.00px;top:281.80px;width:25.00px;height:6.40px;background:#4d4d4d;"></div>
<span style="left:34.00px;top:283.02px;font-size:3px;line-height:4.50px;height:4.50px;color:#c9c9c9;">× ‹‹‹‹‹</span>
<div style="left:48.20px;top:281.80px;width:5.80px;height:6.40px;background:#7f8bb6;"></div>
<svg style="left:55.20px;top:284.07px" width="1.86" height="1.86"><path d="M0.2 0.46L0.93 1.40L1.66 0.46" stroke="#bbb" stroke-width="0.45" fill="none"/></svg>
<div style="left:26.00px;top:290.80px;width:11.00px;height:1.80px;background:#4c4c4c;"></div>
<svg style="left:54.60px;top:289.80px" width="3.80" height="3.80"><rect x="0.20" y="0.20" width="3.40" height="3.40" rx="0.00" ry="0.00" fill="none" stroke="#6a6a6a" stroke-width="0.4"/></svg>
<div style="left:17.00px;top:294.40px;width:43.00px;height:0.35px;background:#494949;"></div>
<svg style="left:20.40px;top:297.20px" width="3.90" height="3.90"><rect x="0.23" y="0.23" width="3.45" height="3.45" rx="0.00" ry="0.00" fill="none" stroke="#909090" stroke-width="0.45"/></svg>
<span style="left:25.00px;top:297.02px;font-size:3px;line-height:4.50px;height:4.50px;color:#bdbdbd;width:36.00px;clip-path:inset(-1px 0 -1px 0);">Bend brush tip with Deform</span>
<div style="left:17.00px;top:302.40px;width:43.00px;height:0.35px;background:#494949;"></div>
<span style="left:20.00px;top:306.02px;font-size:3.4px;line-height:5.10px;height:5.10px;color:#d0d0d0;">Texture</span>
<div style="left:34.60px;top:304.60px;width:16.40px;height:5.60px;background:#555;"></div>
<span style="left:35.40px;top:306.02px;font-size:3.2px;line-height:4.80px;height:4.80px;color:#d8d8d8;width:15.40px;clip-path:inset(-1px 0 -1px 0);">charcoal m</span>
<svg style="left:48.56px;top:306.41px" width="1.98" height="1.98"><path d="M0.2 0.50L0.99 1.49L1.78 0.50" stroke="#d8d8d8" stroke-width="0.45" fill="none"/></svg>
<svg style="left:53.20px;top:305.20px" width="3.80" height="4.80"><rect x="0.20" y="0.20" width="3.40" height="4.40" rx="0.60" ry="0.60" fill="none" stroke="#9a9a9a" stroke-width="0.4"/></svg>
<svg style="left:16.60px;top:313.20px" width="3.30" height="3.30"><rect x="0.23" y="0.23" width="2.85" height="2.85" rx="0.00" ry="0.00" fill="none" stroke="#909090" stroke-width="0.45"/></svg>
<span style="left:20.00px;top:312.02px;font-size:3.4px;line-height:5.10px;height:5.10px;color:#d0d0d0;">Texture density</span>
<div style="left:26.00px;top:315.40px;width:11.00px;height:2.00px;background:#5a5a5a;"></div>
<div style="left:26.00px;top:315.40px;width:5.00px;height:2.00px;background:#6a6a6a;"></div>
<span style="left:42.50px;top:314.02px;font-size:3.4px;line-height:5.10px;height:5.10px;color:#d8d8d8;width:7.50px;text-align:right;clip-path:inset(-1px 0 -1px 0);">30</span>
<svg style="left:50.20px;top:313.00px;" width="2.4" height="4.6" viewBox="0 0 2.4 4.6"><path d="M.4 1.6L1.2.6 2 1.6M.4 3L1.2 4 2 3" stroke="#aaa" stroke-width=".4" fill="none"/></svg>
<div style="left:54.00px;top:312.20px;width:3.80px;height:5.40px;background:#5b5b5b;"></div>
<span style="left:54.80px;top:313.02px;font-size:2px;line-height:3.00px;height:3.00px;color:#bbb;">▲</span>
<span style="left:20.00px;top:320.02px;font-size:3.4px;line-height:5.10px;height:5.10px;color:#d0d0d0;">Scale ratio</span>
<div style="left:26.00px;top:323.60px;width:11.00px;height:2.00px;background:#5a5a5a;"></div>
<div style="left:26.00px;top:323.60px;width:5.00px;height:2.00px;background:#6a6a6a;"></div>
<span style="left:42.50px;top:322.02px;font-size:3.4px;line-height:5.10px;height:5.10px;color:#d8d8d8;width:7.50px;text-align:right;clip-path:inset(-1px 0 -1px 0);">50</span>
<svg style="left:50.20px;top:321.20px;" width="2.4" height="4.6" viewBox="0 0 2.4 4.6"><path d="M.4 1.6L1.2.6 2 1.6M.4 3L1.2 4 2 3" stroke="#aaa" stroke-width=".4" fill="none"/></svg>
<div style="left:17.00px;top:327.40px;width:43.00px;height:0.35px;background:#494949;"></div>
<span style="left:20.00px;top:329.02px;font-size:3.4px;line-height:5.10px;height:5.10px;color:#d0d0d0;">Stabilization</span>
<div style="left:26.00px;top:332.60px;width:11.00px;height:2.00px;background:#5a5a5a;"></div>
<div style="left:26.00px;top:332.60px;width:5.00px;height:2.00px;background:#6a6a6a;"></div>
<span style="left:42.50px;top:331.02px;font-size:3.4px;line-height:5.10px;height:5.10px;color:#d8d8d8;width:7.50px;text-align:right;clip-path:inset(-1px 0 -1px 0);">15</span>
<svg style="left:50.20px;top:330.20px;" width="2.4" height="4.6" viewBox="0 0 2.4 4.6"><path d="M.4 1.6L1.2.6 2 1.6M.4 3L1.2 4 2 3" stroke="#aaa" stroke-width=".4" fill="none"/></svg>
<svg style="left:16.60px;top:338.40px" width="3.30" height="3.30"><rect x="0.23" y="0.23" width="2.85" height="2.85" rx="0.00" ry="0.00" fill="none" stroke="#909090" stroke-width="0.45"/></svg>
<div style="left:20.60px;top:337.80px;width:3.40px;height:3.40px;background:#e2e2e2;"></div>
<svg style="left:21.00px;top:338.67px" width="1.86" height="1.86"><path d="M0.2 1.02L0.71 1.58L1.76 0.28" stroke="#333" stroke-width="0.45" fill="none"/></svg>
<span style="left:25.00px;top:338.02px;font-size:3.6px;line-height:5.40px;height:5.40px;color:#dedede;">Adjust by speed</span>
<span style="left:24.00px;top:345.02px;font-size:3.3px;line-height:4.95px;height:4.95px;color:#d0d0d0;">Gradation in:</span>
<div style="left:42.60px;top:343.20px;width:6.40px;height:7.00px;background:#7f8bb6;"></div>
<svg style="left:43.40px;top:344.20px;" width="5" height="5" viewBox="0 0 5 5"><path d="M.8 4.2L4 .8" stroke="#e8ecff" stroke-width=".7"/></svg>
<div style="left:49.40px;top:343.20px;width:8.40px;height:7.00px;background:#5b5b5b;"></div>
<svg style="left:50.00px;top:344.20px;" width="5" height="5" viewBox="0 0 5 5"><path d="M.8 4.2L3.4 1.2" stroke="#ddd" stroke-width=".7"/></svg>
<svg style="left:55.40px;top:345.93px" width="1.74" height="1.74"><path d="M0.2 0.43L0.87 1.30L1.54 0.43" stroke="#bbb" stroke-width="0.45" fill="none"/></svg>
<div style="left:15.60px;top:398.60px;width:46.40px;height:6.40px;background:#3a3a3a;"></div>
<svg style="left:52.30px;top:400.00px" width="3.80" height="3.80"><rect x="0.25" y="0.25" width="3.30" height="3.30" rx="1.65" ry="1.65" fill="none" stroke="#a0a0a0" stroke-width="0.5"/></svg>
<svg style="left:57.60px;top:400.00px" width="3.80" height="3.80"><rect x="0.25" y="0.25" width="3.30" height="3.30" rx="1.65" ry="1.65" fill="none" stroke="#a0a0a0" stroke-width="0.5"/></svg>
<div style="left:536.50px;top:19.80px;width:183.50px;height:385.20px;background:#424242;"></div>
<div style="left:536.50px;top:19.80px;width:32.30px;height:385.20px;background:#464646;"></div>
<div style="left:533.00px;top:20.90px;width:3.50px;height:384.10px;background:#444;"></div>
<div style="left:533.40px;top:26.80px;width:2.60px;height:4.40px;background:#626262;"></div>
<span style="left:562.00px;top:15.02px;font-size:3.4px;line-height:5.10px;height:5.10px;color:#777;">›</span>
<span style="left:568.50px;top:15.02px;font-size:3.4px;line-height:5.10px;height:5.10px;color:#777;">»</span>
<span style="left:572.50px;top:15.02px;font-size:3.4px;line-height:5.10px;height:5.10px;color:#777;">«</span>
<span style="left:616.00px;top:15.02px;font-size:3.4px;line-height:5.10px;height:5.10px;color:#777;">›</span>
<span style="left:622.50px;top:15.02px;font-size:3.4px;line-height:5.10px;height:5.10px;color:#777;">»</span>
<span style="left:627.00px;top:15.02px;font-size:3.4px;line-height:5.10px;height:5.10px;color:#777;">«</span>
<span style="left:710.50px;top:15.02px;font-size:3.4px;line-height:5.10px;height:5.10px;color:#777;">›</span>
<span style="left:716.00px;top:15.02px;font-size:3.4px;line-height:5.10px;height:5.10px;color:#777;">×</span>
<div style="left:568.80px;top:19.80px;width:5.40px;height:385.20px;background:#3c3c3c;"></div>
<div style="left:570.60px;top:19.80px;width:0.60px;height:385.20px;background:#303030;"></div>
<div style="left:625.00px;top:19.80px;width:0.50px;height:385.20px;background:#2f2f2f;"></div>
<div style="left:541.40px;top:20.40px;width:24.60px;height:5.20px;background:#4b4b4b;"></div>
<div style="left:538.60px;top:21.40px;width:0.50px;height:3.20px;background:#666;"></div>
<svg style="left:543.60px;top:20.80px;" width="5" height="4.4" viewBox="0 0 5 4.4"><rect x=".6" y="1" width="3.6" height="3" stroke="#ccc" stroke-width=".5" fill="none"/><path d="M1.4 1V.4h2V1" stroke="#ccc" stroke-width=".4" fill="none"/></svg>
<span style="left:549.60px;top:21.02px;font-size:2.9px;line-height:4.35px;height:4.35px;color:#a6a6a6;">Quick Access</span>
<div style="left:537.00px;top:26.60px;width:15.60px;height:6.60px;background:#464646;"></div>
<span style="left:538.00px;top:28.02px;font-size:3.5px;line-height:5.25px;height:5.25px;color:#d6d6d6;width:14.40px;clip-path:inset(-1px 0 -1px 0);">Set 1</span>
<div style="left:553.40px;top:26.60px;width:16.60px;height:6.60px;background:#464646;"></div>
<span style="left:554.20px;top:28.02px;font-size:3.5px;line-height:5.25px;height:5.25px;color:#d6d6d6;width:15.60px;clip-path:inset(-1px 0 -1px 0);">Ink</span>
<div style="left:537.00px;top:34.10px;width:15.60px;height:6.60px;background:#464646;"></div>
<span style="left:538.00px;top:36.02px;font-size:3.5px;line-height:5.25px;height:5.25px;color:#d6d6d6;width:14.40px;clip-path:inset(-1px 0 -1px 0);">Color</span>
<div style="left:553.40px;top:34.10px;width:16.60px;height:6.60px;background:#464646;"></div>
<span style="left:554.20px;top:36.02px;font-size:3.5px;line-height:5.25px;height:5.25px;color:#d6d6d6;width:15.60px;clip-path:inset(-1px 0 -1px 0);">Set 2</span>
<div style="left:537.00px;top:41.60px;width:15.60px;height:6.60px;background:#5f6b92;"></div>
<span style="left:538.00px;top:43.02px;font-size:3.5px;line-height:5.25px;height:5.25px;color:#d6d6d6;width:14.40px;clip-path:inset(-1px 0 -1px 0);">Ran- B</span>
<div style="left:553.40px;top:41.60px;width:16.60px;height:6.60px;background:#464646;"></div>
<span style="left:554.20px;top:43.02px;font-size:3.5px;line-height:5.25px;height:5.25px;color:#d6d6d6;width:15.60px;clip-path:inset(-1px 0 -1px 0);">Comparis</span>
<svg style="left:541.40px;top:50.70px;" width="6.4" height="6.4" viewBox="0 0 6.4 6.4"><path d="M1 1.4L3 .8 5.4 3.4 5 5.4 2.6 5.6 1 3.6z" fill="#f01818"/></svg>
<svg style="left:556.40px;top:50.90px;" width="6" height="6" viewBox="0 0 6 6"><path d="M3 .5L5.1 2.5 3.7 3.7 3 5.5 2.3 3.7 .9 2.5z" fill="#ddd"/><path d="M3 2v1.6" stroke="#555" stroke-width=".4"/></svg>
<span style="left:537.40px;top:59.02px;font-size:3.3px;line-height:4.95px;height:4.95px;color:#cdcdcd;width:15.00px;text-align:center;clip-path:inset(-1px 0 -1px 0);">Pencil R1</span>
<span style="left:552.60px;top:59.02px;font-size:3.3px;line-height:4.95px;height:4.95px;color:#cdcdcd;width:16.40px;text-align:center;clip-path:inset(-1px 0 -1px 0);">Eraser H..</span>
<svg style="left:541.60px;top:65.52px;" width="6" height="6" viewBox="0 0 6 6"><path d="M3 .5L5.1 2.5 3.7 3.7 3 5.5 2.3 3.7 .9 2.5z" fill="#ddd"/><path d="M3 2v1.6" stroke="#555" stroke-width=".4"/></svg>
<svg style="left:556.20px;top:65.32px;" width="6.4" height="6.4" viewBox="0 0 6.4 6.4"><path d="M1 1.4L3 .8 5.4 3.4 5 5.4 2.6 5.6 1 3.6z" fill="#e8a628"/></svg>
<span style="left:537.40px;top:74.02px;font-size:3.3px;line-height:4.95px;height:4.95px;color:#cdcdcd;width:15.00px;text-align:center;clip-path:inset(-1px 0 -1px 0);">S MBR</span>
<span style="left:552.60px;top:74.02px;font-size:3.3px;line-height:4.95px;height:4.95px;color:#cdcdcd;width:16.40px;text-align:center;clip-path:inset(-1px 0 -1px 0);">Bong pen</span>
<svg style="left:541.60px;top:80.14px;" width="6" height="6" viewBox="0 0 6 6"><path d="M3 .5L5.1 2.5 3.7 3.7 3 5.5 2.3 3.7 .9 2.5z" fill="#ddd"/><path d="M3 2v1.6" stroke="#555" stroke-width=".4"/></svg>
<svg style="left:557.20px;top:80.94px" width="4.80" height="4.80"><rect x="0.25" y="0.25" width="4.30" height="4.30" rx="0.00" ry="0.00" fill="none" stroke="#6e6e6e" stroke-width="0.5"/></svg>
<span style="left:537.40px;top:88.02px;font-size:3.3px;line-height:4.95px;height:4.95px;color:#cdcdcd;width:15.00px;text-align:center;clip-path:inset(-1px 0 -1px 0);">S RES</span>
<span style="left:552.60px;top:88.02px;font-size:3.3px;line-height:4.95px;height:4.95px;color:#cdcdcd;width:16.40px;text-align:center;clip-path:inset(-1px 0 -1px 0);">Rectangle</span>
<svg style="left:541.40px;top:94.56px;" width="6.4" height="6.4" viewBox="0 0 6.4 6.4"><path d="M1 1.4L3 .8 5.4 3.4 5 5.4 2.6 5.6 1 3.6z" fill="#8a8a8a"/></svg>
<svg style="left:556.20px;top:94.56px;" width="6.4" height="6.4" viewBox="0 0 6.4 6.4"><path d="M1 1.4L3 .8 5.4 3.4 5 5.4 2.6 5.6 1 3.6z" fill="#3fc9a2"/></svg>
<span style="left:537.40px;top:103.02px;font-size:3.3px;line-height:4.95px;height:4.95px;color:#cdcdcd;width:15.00px;text-align:center;clip-path:inset(-1px 0 -1px 0);">Lasso fill</span>
<span style="left:552.60px;top:103.02px;font-size:3.3px;line-height:4.95px;height:4.95px;color:#cdcdcd;width:16.40px;text-align:center;clip-path:inset(-1px 0 -1px 0);">Reborn Hi</span>
<div style="left:542.00px;top:109.78px;width:5.20px;height:5.20px;background:#efefef;border-radius:.4px;"></div>
<svg style="left:542.00px;top:109.78px;" width="5.2" height="5.2" viewBox="0 0 5.2 5.2"><path d="M1 1l1.2 1.2M4.2 1L3 2.2M1 4.2L2.2 3M4.2 4.2L3 3" stroke="#222" stroke-width=".8"/></svg>
<svg style="left:556.20px;top:109.18px;" width="6.4" height="6.4" viewBox="0 0 6.4 6.4"><path d="M1 1.4L3 .8 5.4 3.4 5 5.4 2.6 5.6 1 3.6z" fill="#2fc2a0"/></svg>
<span style="left:537.40px;top:118.02px;font-size:3.3px;line-height:4.95px;height:4.95px;color:#cdcdcd;width:15.00px;text-align:center;clip-path:inset(-1px 0 -1px 0);">texture Ch</span>
<span style="left:552.60px;top:118.02px;font-size:3.3px;line-height:4.95px;height:4.95px;color:#cdcdcd;width:16.40px;text-align:center;clip-path:inset(-1px 0 -1px 0);">Reborn H</span>
<div style="left:542.00px;top:124.40px;width:5.20px;height:5.20px;background:#efefef;border-radius:.4px;"></div>
<svg style="left:542.00px;top:124.40px;" width="5.2" height="5.2" viewBox="0 0 5.2 5.2"><path d="M1 1l1.2 1.2M4.2 1L3 2.2M1 4.2L2.2 3M4.2 4.2L3 3" stroke="#6a5a48" stroke-width=".8"/></svg>
<div style="left:556.80px;top:124.40px;width:5.20px;height:5.20px;background:#efefef;border-radius:.4px;"></div>
<svg style="left:556.80px;top:124.40px;" width="5.2" height="5.2" viewBox="0 0 5.2 5.2"><path d="M1 1l1.2 1.2M4.2 1L3 2.2M1 4.2L2.2 3M4.2 4.2L3 3" stroke="#333" stroke-width=".8"/></svg>
<span style="left:537.40px;top:132.02px;font-size:3.3px;line-height:4.95px;height:4.95px;color:#cdcdcd;width:15.00px;text-align:center;clip-path:inset(-1px 0 -1px 0);">Rough</span>
<span style="left:552.60px;top:132.02px;font-size:3.3px;line-height:4.95px;height:4.95px;color:#cdcdcd;width:16.40px;text-align:center;clip-path:inset(-1px 0 -1px 0);">Hard</span>
<svg style="left:541.60px;top:138.62px;" width="6" height="6" viewBox="0 0 6 6"><path d="M3 .5L5.1 2.5 3.7 3.7 3 5.5 2.3 3.7 .9 2.5z" fill="#58a8f0"/><path d="M3 2v1.6" stroke="#555" stroke-width=".4"/></svg>
<svg style="left:556.40px;top:138.62px;" width="6" height="6" viewBox="0 0 6 6"><path d="M3 .5L5.1 2.5 3.7 3.7 3 5.5 2.3 3.7 .9 2.5z" fill="#58a8f0"/><path d="M3 2v1.6" stroke="#555" stroke-width=".4"/></svg>
<span style="left:537.40px;top:147.02px;font-size:3.3px;line-height:4.95px;height:4.95px;color:#cdcdcd;width:15.00px;text-align:center;clip-path:inset(-1px 0 -1px 0);">Cy HB n7</span>
<span style="left:552.60px;top:147.02px;font-size:3.3px;line-height:4.95px;height:4.95px;color:#cdcdcd;width:16.40px;text-align:center;clip-path:inset(-1px 0 -1px 0);">Cy HB n7</span>
<div style="left:537.00px;top:152.94px;width:15.40px;height:13.60px;background:#5f6b92;"></div>
<svg style="left:541.40px;top:153.04px;" width="6.4" height="6.4" viewBox="0 0 6.4 6.4"><path d="M1 1.4L3 .8 5.4 3.4 5 5.4 2.6 5.6 1 3.6z" fill="#18d868"/></svg>
<svg style="left:556.40px;top:153.24px;" width="6" height="6" viewBox="0 0 6 6"><path d="M3 .5L5.1 2.5 3.7 3.7 3 5.5 2.3 3.7 .9 2.5z" fill="#ddd"/><path d="M3 2v1.6" stroke="#555" stroke-width=".4"/></svg>
<span style="left:537.40px;top:162.02px;font-size:3.3px;line-height:4.95px;height:4.95px;color:#cdcdcd;width:15.00px;text-align:center;clip-path:inset(-1px 0 -1px 0);">Pencil, 4b</span>
<span style="left:552.60px;top:162.02px;font-size:3.3px;line-height:4.95px;height:4.95px;color:#cdcdcd;width:16.40px;text-align:center;clip-path:inset(-1px 0 -1px 0);">G-pen</span>
<svg style="left:541.60px;top:167.86px;" width="6" height="6" viewBox="0 0 6 6"><path d="M3 .5L5.1 2.5 3.7 3.7 3 5.5 2.3 3.7 .9 2.5z" fill="#ddd"/><path d="M3 2v1.6" stroke="#555" stroke-width=".4"/></svg>
<svg style="left:556.40px;top:167.86px;" width="6" height="6" viewBox="0 0 6 6"><path d="M3 .5L5.1 2.5 3.7 3.7 3 5.5 2.3 3.7 .9 2.5z" fill="#ddd"/><path d="M3 2v1.6" stroke="#555" stroke-width=".4"/></svg>
<span style="left:537.40px;top:176.02px;font-size:3.3px;line-height:4.95px;height:4.95px;color:#cdcdcd;width:15.00px;text-align:center;clip-path:inset(-1px 0 -1px 0);">Real G-Pe</span>
<span style="left:552.60px;top:176.02px;font-size:3.3px;line-height:4.95px;height:4.95px;color:#cdcdcd;width:16.40px;text-align:center;clip-path:inset(-1px 0 -1px 0);">Mid pen 2</span>
<svg style="left:541.60px;top:182.48px;" width="6" height="6" viewBox="0 0 6 6"><path d="M3 .5L5.1 2.5 3.7 3.7 3 5.5 2.3 3.7 .9 2.5z" fill="#ddd"/><path d="M3 2v1.6" stroke="#555" stroke-width=".4"/></svg>
<svg style="left:556.40px;top:182.48px;" width="6" height="6" viewBox="0 0 6 6"><path d="M3 .5L5.1 2.5 3.7 3.7 3 5.5 2.3 3.7 .9 2.5z" fill="#ddd"/><path d="M3 2v1.6" stroke="#555" stroke-width=".4"/></svg>
<span style="left:537.40px;top:191.02px;font-size:3.3px;line-height:4.95px;height:4.95px;color:#cdcdcd;width:15.00px;text-align:center;clip-path:inset(-1px 0 -1px 0);">Textured ;</span>
<span style="left:552.60px;top:191.02px;font-size:3.3px;line-height:4.95px;height:4.95px;color:#cdcdcd;width:16.40px;text-align:center;clip-path:inset(-1px 0 -1px 0);">Rough pen</span>
<div style="left:542.20px;top:197.70px;width:4.80px;height:4.80px;background:#e89a18;"></div>
<div style="left:557.00px;top:197.70px;width:4.80px;height:4.80px;background:#f4c8c8;"></div>
<span style="left:537.40px;top:205.02px;font-size:3.3px;line-height:4.95px;height:4.95px;color:#cdcdcd;width:15.00px;text-align:center;clip-path:inset(-1px 0 -1px 0);">landing c</span>
<span style="left:552.60px;top:205.02px;font-size:3.3px;line-height:4.95px;height:4.95px;color:#cdcdcd;width:16.40px;text-align:center;clip-path:inset(-1px 0 -1px 0);">T Head</span>
<svg style="left:541.60px;top:211.72px;" width="6" height="6" viewBox="0 0 6 6"><rect x=".8" y="1.8" width="4.4" height="3.4" fill="#ddd"/><path d="M1.4 1.8V.8h3.2v1" stroke="#ddd" stroke-width=".5" fill="none"/><path d="M1.4 3.2h3.2M1.4 4.2h3.2" stroke="#444" stroke-width=".4"/></svg>
<svg style="left:556.40px;top:211.72px;" width="6" height="6" viewBox="0 0 6 6"><rect x=".8" y="1.8" width="4.4" height="3.4" fill="#ddd"/><path d="M1.4 1.8V.8h3.2v1" stroke="#ddd" stroke-width=".5" fill="none"/><path d="M1.4 3.2h3.2M1.4 4.2h3.2" stroke="#444" stroke-width=".4"/></svg>
<span style="left:537.40px;top:220.02px;font-size:3.3px;line-height:4.95px;height:4.95px;color:#cdcdcd;width:15.00px;text-align:center;clip-path:inset(-1px 0 -1px 0);">Red</span>
<span style="left:552.60px;top:220.02px;font-size:3.3px;line-height:4.95px;height:4.95px;color:#cdcdcd;width:16.40px;text-align:center;clip-path:inset(-1px 0 -1px 0);">Blue</span>
<svg style="left:541.60px;top:226.34px;" width="6" height="6" viewBox="0 0 6 6"><rect x=".8" y="1.8" width="4.4" height="3.4" fill="#ddd"/><path d="M1.4 1.8V.8h3.2v1" stroke="#ddd" stroke-width=".5" fill="none"/><path d="M1.4 3.2h3.2M1.4 4.2h3.2" stroke="#444" stroke-width=".4"/></svg>
<svg style="left:556.40px;top:226.34px;" width="6" height="6" viewBox="0 0 6 6"><rect x=".8" y="1.8" width="4.4" height="3.4" fill="#ddd"/><path d="M1.4 1.8V.8h3.2v1" stroke="#ddd" stroke-width=".5" fill="none"/><path d="M1.4 3.2h3.2M1.4 4.2h3.2" stroke="#444" stroke-width=".4"/></svg>
<span style="left:537.40px;top:235.02px;font-size:3.3px;line-height:4.95px;height:4.95px;color:#cdcdcd;width:15.00px;text-align:center;clip-path:inset(-1px 0 -1px 0);">Move up</span>
<span style="left:552.60px;top:235.02px;font-size:3.3px;line-height:4.95px;height:4.95px;color:#cdcdcd;width:16.40px;text-align:center;clip-path:inset(-1px 0 -1px 0);">Move down</span>
<svg style="left:541.60px;top:240.96px;" width="6" height="6" viewBox="0 0 6 6"><rect x=".8" y="1.8" width="4.4" height="3.4" fill="#ddd"/><path d="M1.4 1.8V.8h3.2v1" stroke="#ddd" stroke-width=".5" fill="none"/><path d="M1.4 3.2h3.2M1.4 4.2h3.2" stroke="#444" stroke-width=".4"/></svg>
<svg style="left:556.40px;top:240.96px;" width="6" height="6" viewBox="0 0 6 6"><path d="M.8.8h4.6L.8 5.4z" stroke="#ddd" stroke-width=".7" fill="none"/></svg>
<span style="left:537.40px;top:249.02px;font-size:3.3px;line-height:4.95px;height:4.95px;color:#cdcdcd;width:15.00px;text-align:center;clip-path:inset(-1px 0 -1px 0);">e Paper</span>
<span style="left:552.60px;top:249.02px;font-size:3.3px;line-height:4.95px;height:4.95px;color:#cdcdcd;width:16.40px;text-align:center;clip-path:inset(-1px 0 -1px 0);">Symmetric</span>
<svg style="left:541.60px;top:255.58px;" width="6" height="6" viewBox="0 0 6 6"><rect x=".8" y="1.8" width="4.4" height="3.4" fill="#bbb"/><path d="M1.4 1.8V.8h3.2v1" stroke="#bbb" stroke-width=".5" fill="none"/><path d="M1.4 3.2h3.2M1.4 4.2h3.2" stroke="#444" stroke-width=".4"/></svg>
<svg style="left:556.40px;top:255.58px;" width="6" height="6" viewBox="0 0 6 6"><rect x=".8" y="1.8" width="4.4" height="3.4" fill="#ddd"/><path d="M1.4 1.8V.8h3.2v1" stroke="#ddd" stroke-width=".5" fill="none"/><path d="M1.4 3.2h3.2M1.4 4.2h3.2" stroke="#444" stroke-width=".4"/></svg>
<span style="left:537.40px;top:264.02px;font-size:3.3px;line-height:4.95px;height:4.95px;color:#cdcdcd;width:15.00px;text-align:center;clip-path:inset(-1px 0 -1px 0);">operation</span>
<span style="left:552.60px;top:264.02px;font-size:3.3px;line-height:4.95px;height:4.95px;color:#cdcdcd;width:16.40px;text-align:center;clip-path:inset(-1px 0 -1px 0);">Dire Ruler</span>
<svg style="left:541.60px;top:270.20px;" width="6" height="6" viewBox="0 0 6 6"><rect x=".8" y="1.8" width="4.4" height="3.4" fill="#ddd"/><path d="M1.4 1.8V.8h3.2v1" stroke="#ddd" stroke-width=".5" fill="none"/><path d="M1.4 3.2h3.2M1.4 4.2h3.2" stroke="#444" stroke-width=".4"/></svg>
<svg style="left:556.40px;top:270.20px;" width="6" height="6" viewBox="0 0 6 6"><rect x=".8" y="1.8" width="4.4" height="3.4" fill="#ddd"/><path d="M1.4 1.8V.8h3.2v1" stroke="#ddd" stroke-width=".5" fill="none"/><path d="M1.4 3.2h3.2M1.4 4.2h3.2" stroke="#444" stroke-width=".4"/></svg>
<span style="left:537.40px;top:279.02px;font-size:3.3px;line-height:4.95px;height:4.95px;color:#cdcdcd;width:15.00px;text-align:center;clip-path:inset(-1px 0 -1px 0);">Solo</span>
<span style="left:552.60px;top:279.02px;font-size:3.3px;line-height:4.95px;height:4.95px;color:#cdcdcd;width:16.40px;text-align:center;clip-path:inset(-1px 0 -1px 0);">Hide Paper</span>
<svg style="left:541.60px;top:284.82px;" width="6" height="6" viewBox="0 0 6 6"><rect x=".8" y="1.8" width="4.4" height="3.4" fill="#ddd"/><path d="M1.4 1.8V.8h3.2v1" stroke="#ddd" stroke-width=".5" fill="none"/><path d="M1.4 3.2h3.2M1.4 4.2h3.2" stroke="#444" stroke-width=".4"/></svg>
<svg style="left:557.20px;top:285.62px" width="4.80" height="4.80"><rect x="0.25" y="0.25" width="4.30" height="4.30" rx="0.00" ry="0.00" fill="none" stroke="#aaa" stroke-width="0.5"/></svg>
<span style="left:537.40px;top:293.02px;font-size:3.3px;line-height:4.95px;height:4.95px;color:#cdcdcd;width:15.00px;text-align:center;clip-path:inset(-1px 0 -1px 0);">e Paper</span>
<span style="left:552.60px;top:293.02px;font-size:3.3px;line-height:4.95px;height:4.95px;color:#cdcdcd;width:16.40px;text-align:center;clip-path:inset(-1px 0 -1px 0);">Hue/Satur</span>
<div style="left:542.20px;top:301.00px;width:4.80px;height:4.80px;background:#c8563a;"></div>
<div style="left:557.00px;top:301.00px;width:4.80px;height:4.80px;background:#f2ddd0;"></div>
<span style="left:538.00px;top:308.02px;font-size:2.8px;line-height:4.20px;height:4.20px;color:#a9a9a9;width:14.00px;text-align:center;clip-path:inset(-1px 0 -1px 0);">R:200 G</span>
<span style="left:553.00px;top:308.02px;font-size:2.8px;line-height:4.20px;height:4.20px;color:#a9a9a9;width:15.60px;text-align:center;clip-path:inset(-1px 0 -1px 0);">R:242 G:2</span>
<div style="left:542.20px;top:315.42px;width:4.80px;height:4.80px;background:#e08a62;"></div>
<div style="left:557.00px;top:315.42px;width:4.80px;height:4.80px;background:#e6e6e6;"></div>
<span style="left:538.00px;top:323.02px;font-size:2.8px;line-height:4.20px;height:4.20px;color:#a9a9a9;width:14.00px;text-align:center;clip-path:inset(-1px 0 -1px 0);">R:200 G</span>
<span style="left:553.00px;top:323.02px;font-size:2.8px;line-height:4.20px;height:4.20px;color:#a9a9a9;width:15.60px;text-align:center;clip-path:inset(-1px 0 -1px 0);">R:242 G:2</span>
<div style="left:542.20px;top:329.84px;width:4.80px;height:4.80px;background:#e9a9a0;"></div>
<div style="left:557.00px;top:329.84px;width:4.80px;height:4.80px;background:#f6c6cc;"></div>
<span style="left:538.00px;top:337.02px;font-size:2.8px;line-height:4.20px;height:4.20px;color:#a9a9a9;width:14.00px;text-align:center;clip-path:inset(-1px 0 -1px 0);">R:200 G</span>
<span style="left:553.00px;top:337.02px;font-size:2.8px;line-height:4.20px;height:4.20px;color:#a9a9a9;width:15.60px;text-align:center;clip-path:inset(-1px 0 -1px 0);">R:242 G:2</span>
<div style="left:542.20px;top:344.26px;width:4.80px;height:4.80px;background:#2a2a2a;"></div>
<div style="left:557.00px;top:344.26px;width:4.80px;height:4.80px;background:#8a221c;"></div>
<span style="left:538.00px;top:352.02px;font-size:2.8px;line-height:4.20px;height:4.20px;color:#a9a9a9;width:14.00px;text-align:center;clip-path:inset(-1px 0 -1px 0);">R:200 G</span>
<span style="left:553.00px;top:352.02px;font-size:2.8px;line-height:4.20px;height:4.20px;color:#a9a9a9;width:15.60px;text-align:center;clip-path:inset(-1px 0 -1px 0);">R:242 G:2</span>
<div style="left:542.20px;top:358.68px;width:4.80px;height:4.80px;background:#5a3826;"></div>
<div style="left:557.00px;top:358.68px;width:4.80px;height:4.80px;background:#fadfd0;"></div>
<span style="left:538.00px;top:366.02px;font-size:2.8px;line-height:4.20px;height:4.20px;color:#a9a9a9;width:14.00px;text-align:center;clip-path:inset(-1px 0 -1px 0);">R:200 G</span>
<span style="left:553.00px;top:366.02px;font-size:2.8px;line-height:4.20px;height:4.20px;color:#a9a9a9;width:15.60px;text-align:center;clip-path:inset(-1px 0 -1px 0);">R:242 G:2</span>
<div style="left:542.20px;top:373.10px;width:4.80px;height:4.80px;background:#c6bcd6;"></div>
<div style="left:557.00px;top:373.10px;width:4.80px;height:4.80px;background:#c79fc0;"></div>
<span style="left:538.00px;top:380.02px;font-size:2.8px;line-height:4.20px;height:4.20px;color:#a9a9a9;width:14.00px;text-align:center;clip-path:inset(-1px 0 -1px 0);">R:200 G</span>
<span style="left:553.00px;top:380.02px;font-size:2.8px;line-height:4.20px;height:4.20px;color:#a9a9a9;width:15.60px;text-align:center;clip-path:inset(-1px 0 -1px 0);">R:242 G:2</span>
<div style="left:542.20px;top:387.52px;width:4.80px;height:4.80px;background:#dfe4fa;"></div>
<div style="left:557.00px;top:387.52px;width:4.80px;height:4.80px;background:#f41a10;"></div>
<span style="left:538.00px;top:395.02px;font-size:2.8px;line-height:4.20px;height:4.20px;color:#a9a9a9;width:14.00px;text-align:center;clip-path:inset(-1px 0 -1px 0);">R:200 G</span>
<span style="left:553.00px;top:395.02px;font-size:2.8px;line-height:4.20px;height:4.20px;color:#a9a9a9;width:15.60px;text-align:center;clip-path:inset(-1px 0 -1px 0);">R:242 G:2</span>
<div style="left:537.00px;top:297.80px;width:31.00px;height:0.40px;background:#565656;"></div>
<div style="left:579.00px;top:20.40px;width:23.60px;height:5.20px;background:#4b4b4b;"></div>
<div style="left:576.00px;top:21.40px;width:0.50px;height:3.20px;background:#666;"></div>
<svg style="left:581.00px;top:20.80px;" width="5" height="4.4" viewBox="0 0 5 4.4"><rect x=".6" y="1.2" width="3.8" height="2.8" fill="#ddd"/><path d="M.6 1.2l.6-.8h2.6l.6.8" stroke="#ddd" stroke-width=".4" fill="none"/></svg>
<span style="left:587.40px;top:21.02px;font-size:2.9px;line-height:4.35px;height:4.35px;color:#a6a6a6;">Auto Action</span>
<div style="left:574.20px;top:26.00px;width:37.00px;height:6.20px;background:#565656;"></div>
<span style="left:574.20px;top:28.02px;font-size:3.3px;line-height:4.95px;height:4.95px;color:#d2d2d2;width:35.00px;text-align:center;clip-path:inset(-1px 0 -1px 0);">Posase</span>
<svg style="left:607.60px;top:28.27px" width="1.86" height="1.86"><path d="M0.2 0.46L0.93 1.40L1.66 0.46" stroke="#aaa" stroke-width="0.45" fill="none"/></svg>
<svg style="left:613.40px;top:27.20px" width="4.40" height="4.40"><rect x="0.25" y="0.25" width="3.90" height="3.90" rx="0.40" ry="0.40" fill="none" stroke="#c8c8c8" stroke-width="0.5"/></svg>
<svg style="left:619.60px;top:27.20px" width="4.40" height="4.40"><rect x="0.25" y="0.25" width="3.90" height="3.90" rx="0.40" ry="0.40" fill="none" stroke="#888" stroke-width="0.5"/></svg>
<span style="left:620.40px;top:27.02px;font-size:3px;line-height:4.50px;height:4.50px;color:#999;">×</span>
<div style="left:574.20px;top:39.70px;width:50.60px;height:0.35px;background:#373737;"></div>
<div style="left:575.50px;top:34.50px;width:4.00px;height:4.00px;background:#a4a4a4;"></div>
<svg style="left:575.50px;top:34.50px;" width="4" height="4" viewBox="0 0 4 4"><path d="M.9 2.1L1.7 3 3.2 1" stroke="#f6f6f6" stroke-width=".6" fill="none"/></svg>
<div style="left:582.20px;top:34.70px;width:3.60px;height:3.60px;background:#8490ba;"></div>
<svg style="left:588.60px;top:34.50px;" width="3" height="4" viewBox="0 0 3 4"><path d="M.8 .6L2.2 2 .8 3.4" stroke="#cfcfcf" stroke-width=".55" fill="none"/></svg>
<span style="left:594.60px;top:35.02px;font-size:3.4px;line-height:5.10px;height:5.10px;color:#cfcfcf;">Auto action 1</span>
<div style="left:574.20px;top:46.26px;width:50.60px;height:0.35px;background:#373737;"></div>
<div style="left:575.50px;top:41.06px;width:4.00px;height:4.00px;background:#a4a4a4;"></div>
<svg style="left:575.50px;top:41.06px;" width="4" height="4" viewBox="0 0 4 4"><path d="M.9 2.1L1.7 3 3.2 1" stroke="#f6f6f6" stroke-width=".6" fill="none"/></svg>
<div style="left:582.20px;top:41.26px;width:3.60px;height:3.60px;background:#8490ba;"></div>
<div style="left:582.90px;top:42.36px;width:2.20px;height:1.40px;background:#c9d0ea;"></div>
<svg style="left:588.60px;top:41.06px;" width="3" height="4" viewBox="0 0 3 4"><path d="M.8 .6L2.2 2 .8 3.4" stroke="#cfcfcf" stroke-width=".55" fill="none"/></svg>
<span style="left:594.60px;top:42.02px;font-size:3.4px;line-height:5.10px;height:5.10px;color:#cfcfcf;">RED line</span>
<div style="left:574.20px;top:52.82px;width:50.60px;height:0.35px;background:#373737;"></div>
<div style="left:575.50px;top:47.62px;width:4.00px;height:4.00px;background:#a4a4a4;"></div>
<svg style="left:575.50px;top:47.62px;" width="4" height="4" viewBox="0 0 4 4"><path d="M.9 2.1L1.7 3 3.2 1" stroke="#f6f6f6" stroke-width=".6" fill="none"/></svg>
<svg style="left:588.60px;top:47.62px;" width="3" height="4" viewBox="0 0 3 4"><path d="M.8 .6L2.2 2 .8 3.4" stroke="#cfcfcf" stroke-width=".55" fill="none"/></svg>
<span style="left:594.60px;top:48.02px;font-size:3.4px;line-height:5.10px;height:5.10px;color:#cfcfcf;">Paper</span>
<div style="left:574.20px;top:59.38px;width:50.60px;height:0.35px;background:#373737;"></div>
<div style="left:575.50px;top:54.18px;width:4.00px;height:4.00px;background:#a4a4a4;"></div>
<svg style="left:575.50px;top:54.18px;" width="4" height="4" viewBox="0 0 4 4"><path d="M.9 2.1L1.7 3 3.2 1" stroke="#f6f6f6" stroke-width=".6" fill="none"/></svg>
<div style="left:582.20px;top:54.38px;width:3.60px;height:3.60px;background:#5a5a5a;"></div>
<svg style="left:588.60px;top:54.18px;" width="3" height="4" viewBox="0 0 3 4"><path d="M.8 .6L2.2 2 .8 3.4" stroke="#cfcfcf" stroke-width=".55" fill="none"/></svg>
<span style="left:594.60px;top:55.02px;font-size:3.4px;line-height:5.10px;height:5.10px;color:#cfcfcf;">Auto action 2</span>
<div style="left:574.20px;top:65.94px;width:50.60px;height:0.35px;background:#373737;"></div>
<div style="left:575.50px;top:60.74px;width:4.00px;height:4.00px;background:#a4a4a4;"></div>
<svg style="left:575.50px;top:60.74px;" width="4" height="4" viewBox="0 0 4 4"><path d="M.9 2.1L1.7 3 3.2 1" stroke="#f6f6f6" stroke-width=".6" fill="none"/></svg>
<div style="left:582.20px;top:60.94px;width:3.60px;height:3.60px;background:#5a5a5a;"></div>
<svg style="left:588.60px;top:60.74px;" width="3" height="4" viewBox="0 0 3 4"><path d="M.8 .6L2.2 2 .8 3.4" stroke="#cfcfcf" stroke-width=".55" fill="none"/></svg>
<span style="left:594.60px;top:61.02px;font-size:3.4px;line-height:5.10px;height:5.10px;color:#cfcfcf;">Shading</span>
<div style="left:574.20px;top:72.50px;width:50.60px;height:0.35px;background:#373737;"></div>
<div style="left:575.50px;top:67.30px;width:4.00px;height:4.00px;background:#a4a4a4;"></div>
<svg style="left:575.50px;top:67.30px;" width="4" height="4" viewBox="0 0 4 4"><path d="M.9 2.1L1.7 3 3.2 1" stroke="#f6f6f6" stroke-width=".6" fill="none"/></svg>
<svg style="left:588.60px;top:67.30px;" width="3" height="4" viewBox="0 0 3 4"><path d="M.8 .6L2.2 2 .8 3.4" stroke="#cfcfcf" stroke-width=".55" fill="none"/></svg>
<span style="left:594.60px;top:68.02px;font-size:3.4px;line-height:5.10px;height:5.10px;color:#cfcfcf;">Hide Paper</span>
<div style="left:574.20px;top:79.06px;width:50.60px;height:0.35px;background:#373737;"></div>
<div style="left:575.50px;top:73.86px;width:4.00px;height:4.00px;background:#a4a4a4;"></div>
<svg style="left:575.50px;top:73.86px;" width="4" height="4" viewBox="0 0 4 4"><path d="M.9 2.1L1.7 3 3.2 1" stroke="#f6f6f6" stroke-width=".6" fill="none"/></svg>
<svg style="left:588.60px;top:73.86px;" width="3" height="4" viewBox="0 0 3 4"><path d="M.8 .6L2.2 2 .8 3.4" stroke="#cfcfcf" stroke-width=".55" fill="none"/></svg>
<span style="left:594.60px;top:74.02px;font-size:3.4px;line-height:5.10px;height:5.10px;color:#cfcfcf;">Solo</span>
<div style="left:574.20px;top:85.62px;width:50.60px;height:0.35px;background:#373737;"></div>
<div style="left:575.50px;top:80.42px;width:4.00px;height:4.00px;background:#a4a4a4;"></div>
<svg style="left:575.50px;top:80.42px;" width="4" height="4" viewBox="0 0 4 4"><path d="M.9 2.1L1.7 3 3.2 1" stroke="#f6f6f6" stroke-width=".6" fill="none"/></svg>
<div style="left:582.20px;top:80.62px;width:3.60px;height:3.60px;background:#8490ba;"></div>
<svg style="left:588.60px;top:80.42px;" width="3" height="4" viewBox="0 0 3 4"><path d="M.8 .6L2.2 2 .8 3.4" stroke="#cfcfcf" stroke-width=".55" fill="none"/></svg>
<span style="left:594.60px;top:81.02px;font-size:3.4px;line-height:5.10px;height:5.10px;color:#cfcfcf;">Auto action 3</span>
<div style="left:574.20px;top:92.18px;width:50.60px;height:0.35px;background:#373737;"></div>
<div style="left:575.50px;top:86.98px;width:4.00px;height:4.00px;background:#a4a4a4;"></div>
<svg style="left:575.50px;top:86.98px;" width="4" height="4" viewBox="0 0 4 4"><path d="M.9 2.1L1.7 3 3.2 1" stroke="#f6f6f6" stroke-width=".6" fill="none"/></svg>
<svg style="left:588.60px;top:86.98px;" width="3" height="4" viewBox="0 0 3 4"><path d="M.8 .6L2.2 2 .8 3.4" stroke="#cfcfcf" stroke-width=".55" fill="none"/></svg>
<span style="left:594.60px;top:87.02px;font-size:3.4px;line-height:5.10px;height:5.10px;color:#cfcfcf;">Move up</span>
<div style="left:574.20px;top:98.74px;width:50.60px;height:0.35px;background:#373737;"></div>
<div style="left:575.50px;top:93.54px;width:4.00px;height:4.00px;background:#a4a4a4;"></div>
<svg style="left:575.50px;top:93.54px;" width="4" height="4" viewBox="0 0 4 4"><path d="M.9 2.1L1.7 3 3.2 1" stroke="#f6f6f6" stroke-width=".6" fill="none"/></svg>
<svg style="left:588.60px;top:93.54px;" width="3" height="4" viewBox="0 0 3 4"><path d="M.8 .6L2.2 2 .8 3.4" stroke="#cfcfcf" stroke-width=".55" fill="none"/></svg>
<span style="left:594.60px;top:94.02px;font-size:3.4px;line-height:5.10px;height:5.10px;color:#cfcfcf;">Move down</span>
<div style="left:574.20px;top:105.30px;width:50.60px;height:0.35px;background:#373737;"></div>
<div style="left:575.50px;top:100.10px;width:4.00px;height:4.00px;background:#a4a4a4;"></div>
<svg style="left:575.50px;top:100.10px;" width="4" height="4" viewBox="0 0 4 4"><path d="M.9 2.1L1.7 3 3.2 1" stroke="#f6f6f6" stroke-width=".6" fill="none"/></svg>
<svg style="left:588.60px;top:100.10px;" width="3" height="4" viewBox="0 0 3 4"><path d="M.8 .6L2.2 2 .8 3.4" stroke="#cfcfcf" stroke-width=".55" fill="none"/></svg>
<span style="left:594.60px;top:101.02px;font-size:3.4px;line-height:5.10px;height:5.10px;color:#cfcfcf;">Red</span>
<div style="left:574.20px;top:111.86px;width:50.60px;height:0.35px;background:#373737;"></div>
<div style="left:575.50px;top:106.66px;width:4.00px;height:4.00px;background:#a4a4a4;"></div>
<svg style="left:575.50px;top:106.66px;" width="4" height="4" viewBox="0 0 4 4"><path d="M.9 2.1L1.7 3 3.2 1" stroke="#f6f6f6" stroke-width=".6" fill="none"/></svg>
<svg style="left:588.60px;top:106.66px;" width="3" height="4" viewBox="0 0 3 4"><path d="M.8 .6L2.2 2 .8 3.4" stroke="#cfcfcf" stroke-width=".55" fill="none"/></svg>
<span style="left:594.60px;top:107.02px;font-size:3.4px;line-height:5.10px;height:5.10px;color:#cfcfcf;">Blue</span>
<div style="left:574.20px;top:118.42px;width:50.60px;height:0.35px;background:#373737;"></div>
<div style="left:575.50px;top:113.22px;width:4.00px;height:4.00px;background:#a4a4a4;"></div>
<svg style="left:575.50px;top:113.22px;" width="4" height="4" viewBox="0 0 4 4"><path d="M.9 2.1L1.7 3 3.2 1" stroke="#f6f6f6" stroke-width=".6" fill="none"/></svg>
<svg style="left:588.60px;top:113.22px;" width="3" height="4" viewBox="0 0 3 4"><path d="M.8 .6L2.2 2 .8 3.4" stroke="#cfcfcf" stroke-width=".55" fill="none"/></svg>
<span style="left:594.60px;top:114.02px;font-size:3.4px;line-height:5.10px;height:5.10px;color:#cfcfcf;">Fil layer</span>
<div style="left:574.20px;top:148.00px;width:50.60px;height:5.80px;background:#494949;"></div>
<svg style="left:606.00px;top:148.60px;" width="18" height="4.6" viewBox="0 0 18 4.6"><path d="M1 .6L3.6 2.3 1 4z" fill="#8a8a8a"/><rect x="7" y=".8" width="2.8" height="2.6" stroke="#aaa" stroke-width=".5" fill="none"/><rect x="8.4" y="1.8" width="2.8" height="2.4" stroke="#aaa" stroke-width=".5" fill="#494949"/><rect x="14" y=".8" width="2.6" height="3.2" stroke="#777" stroke-width=".5" fill="none"/></svg>
<div style="left:574.20px;top:154.40px;width:50.60px;height:0.50px;background:#2f2f2f;"></div>
<div style="left:579.00px;top:155.00px;width:26.40px;height:4.80px;background:#4b4b4b;"></div>
<div style="left:576.00px;top:156.00px;width:0.50px;height:3.00px;background:#666;"></div>
<svg style="left:580.60px;top:155.30px;" width="5" height="4.4" viewBox="0 0 5 4.4"><circle cx="2.4" cy="2.2" r="1.6" stroke="#ccc" stroke-width=".5" fill="none"/></svg>
<span style="left:586.60px;top:156.02px;font-size:2.9px;line-height:4.35px;height:4.35px;color:#a6a6a6;">Layer Property</span>
<span style="left:577.00px;top:162.02px;font-size:3.3px;line-height:4.95px;height:4.95px;color:#cfcfcf;">Effect</span>
<div style="left:592.80px;top:165.00px;width:28.60px;height:6.20px;background:#555;"></div>
<svg style="left:594.50px;top:166.40px" width="4.20" height="4.20"><rect x="0.25" y="0.25" width="3.70" height="3.70" rx="1.85" ry="1.85" fill="none" stroke="#bdbdbd" stroke-width="0.5"/></svg>
<svg style="left:599.90px;top:166.40px" width="4.20" height="4.20"><rect x="0.25" y="0.25" width="3.70" height="3.70" rx="0.40" ry="0.40" fill="none" stroke="#bdbdbd" stroke-width="0.5"/></svg>
<svg style="left:605.30px;top:166.40px" width="4.20" height="4.20"><rect x="0.25" y="0.25" width="3.70" height="3.70" rx="0.40" ry="0.40" fill="none" stroke="#bdbdbd" stroke-width="0.5"/></svg>
<svg style="left:610.50px;top:166.40px" width="4.20" height="4.20"><rect x="0.25" y="0.25" width="3.70" height="3.70" rx="0.40" ry="0.40" fill="none" stroke="#bdbdbd" stroke-width="0.5"/></svg>
<svg style="left:616.60px;top:167.21px" width="1.98" height="1.98"><path d="M0.2 0.50L0.99 1.49L1.78 0.50" stroke="#bbb" stroke-width="0.45" fill="none"/></svg>
<span style="left:577.00px;top:173.02px;font-size:3.3px;line-height:4.95px;height:4.95px;color:#cfcfcf;">Expression color</span>
<div style="left:578.80px;top:177.00px;width:27.20px;height:6.20px;background:#555;"></div>
<svg style="left:584.40px;top:177.80px;" width="5" height="5" viewBox="0 0 5 5"><circle cx="2.5" cy="1.6" r="1.3" fill="#e84a4a"/><circle cx="1.6" cy="3.2" r="1.3" fill="#4ac86a"/><circle cx="3.4" cy="3.2" r="1.3" fill="#4a8ae8"/></svg>
<span style="left:590.40px;top:179.02px;font-size:3.4px;line-height:5.10px;height:5.10px;color:#d6d6d6;">Color</span>
<svg style="left:602.00px;top:179.27px" width="1.86" height="1.86"><path d="M0.2 0.46L0.93 1.40L1.66 0.46" stroke="#bbb" stroke-width="0.45" fill="none"/></svg>
<div style="left:574.20px;top:195.80px;width:50.60px;height:0.50px;background:#2f2f2f;"></div>
<div style="left:579.00px;top:196.60px;width:16.60px;height:4.80px;background:#4b4b4b;"></div>
<div style="left:576.00px;top:197.40px;width:0.50px;height:3.00px;background:#666;"></div>
<svg style="left:580.60px;top:197.00px;" width="5" height="4.4" viewBox="0 0 5 4.4"><path d="M2.4 .6l1.8 1-1.8 1-1.8-1zM.6 2.8l1.8 1 1.8-1" stroke="#ccc" stroke-width=".5" fill="none"/></svg>
<span style="left:586.60px;top:197.02px;font-size:2.9px;line-height:4.35px;height:4.35px;color:#a6a6a6;">Layer</span>
<div style="left:596.00px;top:196.80px;width:7.40px;height:4.40px;background:#454545;"></div>
<div style="left:604.00px;top:196.80px;width:7.40px;height:4.40px;background:#454545;"></div>
<svg style="left:598.00px;top:197.80px" width="3.60" height="2.80"><rect x="0.20" y="0.20" width="3.20" height="2.40" rx="0.00" ry="0.00" fill="none" stroke="#8a8a8a" stroke-width="0.4"/></svg><svg style="left:606.00px;top:197.80px" width="3.60" height="2.80"><rect x="0.20" y="0.20" width="3.20" height="2.40" rx="0.00" ry="0.00" fill="none" stroke="#8a8a8a" stroke-width="0.4"/></svg>
<div style="left:574.60px;top:202.00px;width:6.60px;height:6.20px;background:#505050;"></div>
<svg style="left:576.00px;top:203.40px" width="4.20" height="4.00"><rect x="0.25" y="0.25" width="3.70" height="3.50" rx="0.00" ry="0.00" fill="none" stroke="#b0b0b0" stroke-width="0.5"/></svg>
<div style="left:581.60px;top:202.00px;width:4.00px;height:6.20px;background:#4a4a4a;"></div>
<svg style="left:582.20px;top:204.33px" width="1.74" height="1.74"><path d="M0.2 0.43L0.87 1.30L1.54 0.43" stroke="#aaa" stroke-width="0.45" fill="none"/></svg>
<div style="left:586.40px;top:202.00px;width:13.00px;height:6.20px;background:#5a5a5a;"></div>
<span style="left:587.00px;top:204.02px;font-size:3.2px;line-height:4.80px;height:4.80px;color:#d0d0d0;">Norma</span>
<svg style="left:596.40px;top:204.33px" width="1.74" height="1.74"><path d="M0.2 0.43L0.87 1.30L1.54 0.43" stroke="#bbb" stroke-width="0.45" fill="none"/></svg>
<div style="left:600.80px;top:203.00px;width:13.00px;height:4.20px;background:#e4e4e4;"></div>
<div style="left:600.80px;top:203.00px;width:13.00px;height:1.40px;background:#bdbdbd;"></div>
<span style="left:615.40px;top:204.02px;font-size:3.3px;line-height:4.95px;height:4.95px;color:#cfcfcf;">100</span>
<svg style="left:621.80px;top:203.00px;" width="2.4" height="4.6" viewBox="0 0 2.4 4.6"><path d="M.4 1.6L1.2.6 2 1.6M.4 3L1.2 4 2 3" stroke="#aaa" stroke-width=".4" fill="none"/></svg>
<svg style="left:578.40px;top:209.20px;" width="4.4" height="4.8" viewBox="0 0 4.4 4.8"><rect x=".9" y="1.2" width="2.6" height="2.4" stroke="#cacaca" stroke-width=".5" fill="none"/></svg>
<svg style="left:583.80px;top:209.20px;" width="4.4" height="4.8" viewBox="0 0 4.4 4.8"><path d="M.8 3.8L2.2 .8 3.6 3.8z M1 4.2h2.4" stroke="#cacaca" stroke-width=".5" fill="none"/></svg>
<svg style="left:589.40px;top:209.20px;" width="4.4" height="4.8" viewBox="0 0 4.4 4.8"><path d="M.8 3.8L2.2 .8 3.6 3.8z M1 4.2h2.4" stroke="#cacaca" stroke-width=".5" fill="none"/></svg>
<svg style="left:595.20px;top:209.20px;" width="4.4" height="4.8" viewBox="0 0 4.4 4.8"><rect x=".9" y="1.2" width="2.6" height="2.4" stroke="#cacaca" stroke-width=".5" fill="none"/></svg>
<svg style="left:601.20px;top:209.20px;" width="4.4" height="4.8" viewBox="0 0 4.4 4.8"><rect x=".9" y="1.2" width="2.6" height="2.4" stroke="#cacaca" stroke-width=".5" fill="none"/></svg>
<svg style="left:607.40px;top:209.20px;" width="4.4" height="4.8" viewBox="0 0 4.4 4.8"><rect x=".9" y="1.2" width="2.6" height="2.4" stroke="#7a7a7a" stroke-width=".5" fill="none"/></svg>
<svg style="left:616.40px;top:209.20px;" width="4.4" height="4.8" viewBox="0 0 4.4 4.8"><rect x=".9" y="1.2" width="2.6" height="2.4" stroke="#7a7a7a" stroke-width=".5" fill="none"/></svg>
<div style="left:574.60px;top:215.20px;width:5.00px;height:6.20px;background:#6974a0;"></div>
<svg style="left:575.50px;top:217.00px" width="3.40" height="3.20"><rect x="0.25" y="0.25" width="2.90" height="2.70" rx="0.30" ry="0.30" fill="none" stroke="#c6c6c6" stroke-width="0.5"/></svg>
<svg style="left:581.10px;top:217.00px" width="3.40" height="3.20"><rect x="0.25" y="0.25" width="2.90" height="2.70" rx="0.30" ry="0.30" fill="none" stroke="#c6c6c6" stroke-width="0.5"/></svg>
<svg style="left:586.50px;top:217.00px" width="3.40" height="3.20"><rect x="0.25" y="0.25" width="2.90" height="2.70" rx="0.30" ry="0.30" fill="none" stroke="#c6c6c6" stroke-width="0.5"/></svg>
<svg style="left:592.10px;top:217.00px" width="3.40" height="3.20"><rect x="0.25" y="0.25" width="2.90" height="2.70" rx="0.30" ry="0.30" fill="none" stroke="#c6c6c6" stroke-width="0.5"/></svg>
<svg style="left:597.70px;top:217.00px" width="3.40" height="3.20"><rect x="0.25" y="0.25" width="2.90" height="2.70" rx="0.30" ry="0.30" fill="none" stroke="#6c6c6c" stroke-width="0.5"/></svg>
<svg style="left:603.10px;top:217.00px" width="3.40" height="3.20"><rect x="0.25" y="0.25" width="2.90" height="2.70" rx="0.30" ry="0.30" fill="none" stroke="#6c6c6c" stroke-width="0.5"/></svg>
<svg style="left:608.90px;top:216.60px" width="3.60" height="3.80"><rect x="0.35" y="0.35" width="2.90" height="3.10" rx="0.00" ry="0.00" fill="none" stroke="#e6e6e6" stroke-width="0.7"/></svg>
<svg style="left:615.30px;top:217.00px" width="3.40" height="3.20"><rect x="0.25" y="0.25" width="2.90" height="2.70" rx="0.30" ry="0.30" fill="none" stroke="#9a9a9a" stroke-width="0.5"/></svg>
<svg style="left:620.30px;top:217.00px" width="3.40" height="3.20"><rect x="0.25" y="0.25" width="2.90" height="2.70" rx="0.30" ry="0.30" fill="none" stroke="#9a9a9a" stroke-width="0.5"/></svg>
<div style="left:574.20px;top:221.80px;width:50.60px;height:30.20px;background:#3a3a3a;"></div>
<div style="left:574.20px;top:221.80px;width:50.60px;height:0.40px;background:#2c2c2c;"></div>
<div style="left:574.20px;top:231.80px;width:50.60px;height:0.40px;background:#2c2c2c;"></div>
<div style="left:574.20px;top:241.80px;width:50.60px;height:0.40px;background:#2c2c2c;"></div>
<div style="left:574.20px;top:251.80px;width:50.60px;height:0.40px;background:#2c2c2c;"></div>
<div style="left:579.80px;top:221.80px;width:0.40px;height:30.00px;background:#2c2c2c;"></div>
<div style="left:585.20px;top:221.80px;width:0.40px;height:30.00px;background:#2c2c2c;"></div>
<div style="left:585.80px;top:222.30px;width:35.40px;height:9.30px;background:#5b6994;"></div>
<svg style="left:575.20px;top:225.00px;" width="4.4" height="3.2" viewBox="0 0 4.4 3.2"><path d="M.4 1.6Q2.2 -.2 4 1.6Q2.2 3.4 .4 1.6z" fill="#d0d0d0"/><circle cx="2.2" cy="1.6" r=".7" fill="#444"/></svg>
<svg style="left:580.40px;top:224.20px;" width="4.6" height="4.8" viewBox="0 0 4.6 4.8"><path d="M.8 4L3.6 1.2" stroke="#e6e6e6" stroke-width=".8"/><path d="M.6 4.4h2" stroke="#e6e6e6" stroke-width=".4"/></svg>
<div style="left:587.60px;top:223.80px;width:6.40px;height:5.80px;background:#9aa3c6;"></div>
<div style="left:588.20px;top:224.40px;width:5.20px;height:4.60px;background:#f6f6f6;"></div>
<span style="left:596.00px;top:223.02px;font-size:3.3px;line-height:4.95px;height:4.95px;color:#c3cbe6;">100 % Normal</span>
<span style="left:595.60px;top:227.02px;font-size:3.4px;line-height:5.10px;height:5.10px;color:#c3cbe6;">Layer 2</span>
<svg style="left:575.20px;top:234.80px;" width="4.4" height="3.2" viewBox="0 0 4.4 3.2"><path d="M.4 1.6Q2.2 -.2 4 1.6Q2.2 3.4 .4 1.6z" fill="#d0d0d0"/><circle cx="2.2" cy="1.6" r=".7" fill="#444"/></svg>
<svg style="left:586.00px;top:234.80px;" width="3" height="4" viewBox="0 0 3 4"><path d="M.8 .6L2.2 2 .8 3.4" stroke="#cfcfcf" stroke-width=".55" fill="none"/></svg>
<svg style="left:589.60px;top:234.40px;" width="5" height="4.6" viewBox="0 0 5 4.6"><path d="M.6 1h1.6l.5.6h1.9v2.6H.6z" fill="#cfcfcf"/></svg>
<span style="left:597.60px;top:233.02px;font-size:3.3px;line-height:4.95px;height:4.95px;color:#c6c6c6;">100 % Normal</span>
<span style="left:597.60px;top:237.02px;font-size:3.4px;line-height:5.10px;height:5.10px;color:#c6c6c6;">Folder 1</span>
<svg style="left:575.20px;top:244.60px;" width="4.4" height="3.2" viewBox="0 0 4.4 3.2"><path d="M.4 1.6Q2.2 -.2 4 1.6Q2.2 3.4 .4 1.6z" fill="#d0d0d0"/><circle cx="2.2" cy="1.6" r=".7" fill="#444"/></svg>
<div style="left:587.60px;top:243.40px;width:6.40px;height:5.80px;background:#8a8a8a;"></div>
<div style="left:588.20px;top:244.00px;width:5.20px;height:4.60px;background:#f6f6f6;"></div>
<div style="left:597.20px;top:242.80px;width:5.00px;height:4.80px;background:#dcdcdc;"></div>
<svg style="left:597.20px;top:242.80px;" width="5" height="4.8" viewBox="0 0 5 4.8"><path d="M1.2 1h2.6v2.8H1.2z" stroke="#555" stroke-width=".5" fill="none"/></svg>
<span style="left:602.80px;top:246.02px;font-size:3.3px;line-height:4.95px;height:4.95px;color:#c6c6c6;">Paper</span>
<div style="left:622.80px;top:221.80px;width:2.20px;height:180.00px;background:#4a4a4a;"></div>
<div style="left:630.80px;top:20.40px;width:19.20px;height:5.20px;background:#444;"></div>
<svg style="left:631.60px;top:21.00px;" width="5" height="4" viewBox="0 0 5 4"><rect x=".6" y=".6" width="3.8" height="2.8" stroke="#8a8a8a" stroke-width=".5" fill="none"/></svg>
<span style="left:637.20px;top:21.02px;font-size:2.8px;line-height:4.20px;height:4.20px;color:#858585;">Sub View</span>
<div style="left:652.60px;top:20.40px;width:18.20px;height:5.20px;background:#4e4e4e;"></div>
<svg style="left:653.40px;top:21.00px;" width="5" height="4" viewBox="0 0 5 4"><rect x=".6" y=".6" width="3.8" height="2.8" stroke="#e0e0e0" stroke-width=".5" fill="#ddd"/></svg>
<span style="left:659.00px;top:21.02px;font-size:2.8px;line-height:4.20px;height:4.20px;color:#d8d8d8;">Navigator</span>
<div style="left:673.00px;top:20.40px;width:20.60px;height:5.20px;background:#444;"></div>
<svg style="left:673.80px;top:21.00px;" width="5" height="4" viewBox="0 0 5 4"><rect x=".6" y=".6" width="3.8" height="2.8" stroke="#8a8a8a" stroke-width=".5" fill="none"/></svg>
<span style="left:679.40px;top:21.02px;font-size:2.8px;line-height:4.20px;height:4.20px;color:#858585;">Information</span>
<div style="left:628.00px;top:21.40px;width:0.50px;height:3.20px;background:#666;"></div>
<div style="left:625.50px;top:26.30px;width:94.50px;height:125.40px;background:#2c2c2c;"></div>
<div style="left:625.50px;top:26.30px;width:94.50px;height:0.50px;background:#4a4a4a;"></div>
<div style="left:625.60px;top:45.90px;width:94.40px;height:85.80px;background:#7a2a2a;"></div>
<svg style="left:625.6px;top:46.4px" width="94.4" height="84.6"><use href="#art" x="0" y="0" width="94.4" height="84.6"/></svg>
<div style="left:621.20px;top:27.00px;width:3.40px;height:3.60px;background:#5a5a5a;"></div>
<span style="left:621.80px;top:27.02px;font-size:2.8px;line-height:4.20px;height:4.20px;color:#aaa;">×</span>
<div style="left:625.50px;top:151.70px;width:94.50px;height:13.60px;background:#424242;"></div>
<div style="left:626.4px;top:153.4px;width:51.6px;height:4.2px;background:linear-gradient(#555,#2a2a2a 60%,#333);"></div>
<div style="left:626.4px;top:159.4px;width:51.6px;height:4.2px;background:linear-gradient(#2c2c2c,#555 70%,#3a3a3a);"></div>
<div style="left:652.20px;top:152.60px;width:0.60px;height:11.60px;background:#8a8a8a;"></div>
<span style="left:684.40px;top:154.02px;font-size:3.2px;line-height:4.80px;height:4.80px;color:#d0d0d0;">14.8</span>
<span style="left:685.60px;top:160.02px;font-size:3.2px;line-height:4.80px;height:4.80px;color:#d0d0d0;">0.0</span>
<svg style="left:691.80px;top:153.80px" width="4.00" height="4.00"><rect x="0.25" y="0.25" width="3.50" height="3.50" rx="1.75" ry="1.75" fill="none" stroke="#c2c2c2" stroke-width="0.5"/></svg>
<svg style="left:691.80px;top:159.80px" width="4.00" height="4.00"><rect x="0.25" y="0.25" width="3.50" height="3.50" rx="1.75" ry="1.75" fill="none" stroke="#c2c2c2" stroke-width="0.5"/></svg>
<svg style="left:697.60px;top:153.80px" width="4.00" height="4.00"><rect x="0.25" y="0.25" width="3.50" height="3.50" rx="1.75" ry="1.75" fill="none" stroke="#c2c2c2" stroke-width="0.5"/></svg>
<svg style="left:697.60px;top:159.80px" width="4.00" height="4.00"><rect x="0.25" y="0.25" width="3.50" height="3.50" rx="1.75" ry="1.75" fill="none" stroke="#c2c2c2" stroke-width="0.5"/></svg>
<svg style="left:703.20px;top:153.80px" width="4.00" height="4.00"><rect x="0.25" y="0.25" width="3.50" height="3.50" rx="0.30" ry="0.30" fill="none" stroke="#c2c2c2" stroke-width="0.5"/></svg>
<svg style="left:703.20px;top:159.80px" width="4.00" height="4.00"><rect x="0.25" y="0.25" width="3.50" height="3.50" rx="1.75" ry="1.75" fill="none" stroke="#c2c2c2" stroke-width="0.5"/></svg>
<div style="left:708.20px;top:152.70px;width:5.80px;height:5.60px;background:#7682ae;"></div>
<svg style="left:709.20px;top:153.80px" width="4.00" height="4.00"><rect x="0.25" y="0.25" width="3.50" height="3.50" rx="0.30" ry="0.30" fill="none" stroke="#c2c2c2" stroke-width="0.5"/></svg>
<svg style="left:709.20px;top:159.80px" width="4.00" height="4.00"><rect x="0.25" y="0.25" width="3.50" height="3.50" rx="0.30" ry="0.30" fill="none" stroke="#c2c2c2" stroke-width="0.5"/></svg>
<svg style="left:714.80px;top:153.80px" width="4.00" height="4.00"><rect x="0.25" y="0.25" width="3.50" height="3.50" rx="0.30" ry="0.30" fill="none" stroke="#c2c2c2" stroke-width="0.5"/></svg>
<svg style="left:714.80px;top:159.80px" width="4.00" height="4.00"><rect x="0.25" y="0.25" width="3.50" height="3.50" rx="0.30" ry="0.30" fill="none" stroke="#c2c2c2" stroke-width="0.5"/></svg>
<div style="left:625.50px;top:165.30px;width:94.50px;height:0.50px;background:#2f2f2f;"></div>
<div style="left:631.00px;top:165.90px;width:23.00px;height:4.60px;background:#4b4b4b;"></div>
<div style="left:628.00px;top:166.60px;width:0.50px;height:3.00px;background:#666;"></div>
<svg style="left:632.20px;top:166.10px;" width="4.4" height="4.4" viewBox="0 0 4.4 4.4"><circle cx="2.2" cy="2.2" r="1.7" stroke="#d8d8d8" stroke-width=".7" fill="none"/></svg>
<span style="left:638.00px;top:167.02px;font-size:2.9px;line-height:4.35px;height:4.35px;color:#a6a6a6;">Color Wheel</span>
<div style="left:655.00px;top:166.00px;width:7.40px;height:4.40px;background:#464646;"></div>
<svg style="left:657.20px;top:167.20px" width="3.40" height="2.60"><rect x="0.20" y="0.20" width="3.00" height="2.20" rx="0.00" ry="0.00" fill="none" stroke="#8a8a8a" stroke-width="0.4"/></svg>
<div style="left:663.00px;top:166.00px;width:7.40px;height:4.40px;background:#464646;"></div>
<svg style="left:665.20px;top:167.20px" width="3.40" height="2.60"><rect x="0.20" y="0.20" width="3.00" height="2.20" rx="0.00" ry="0.00" fill="none" stroke="#8a8a8a" stroke-width="0.4"/></svg>
<div style="left:671.60px;top:166.00px;width:7.40px;height:4.40px;background:#464646;"></div>
<svg style="left:673.80px;top:167.20px" width="3.40" height="2.60"><rect x="0.20" y="0.20" width="3.00" height="2.20" rx="0.00" ry="0.00" fill="none" stroke="#8a8a8a" stroke-width="0.4"/></svg>
<div style="left:680.00px;top:166.00px;width:7.40px;height:4.40px;background:#464646;"></div>
<svg style="left:682.20px;top:167.20px" width="3.40" height="2.60"><rect x="0.20" y="0.20" width="3.00" height="2.20" rx="0.00" ry="0.00" fill="none" stroke="#8a8a8a" stroke-width="0.4"/></svg>
<div style="left:629.5px;top:172.0px;width:84.8px;height:84.8px;border-radius:50%;background:conic-gradient(from 0deg,#f6f000,#8af000 8%,#20f020 17%,#00f07a 27%,#00e8e8 33%,#0090ff 42%,#1818ff 50%,#a000ff 58%,#ff00e0 66%,#ff0070 75%,#ff1010 83%,#ff8a00 92%,#f6f000);-webkit-mask:radial-gradient(circle,transparent 34.4px,#000 35.199999999999996px);mask:radial-gradient(circle,transparent 34.4px,#000 35.199999999999996px);"></div>
<div style="left:649.2px;top:190.3px;width:46.6px;height:47.8px;background:linear-gradient(to bottom,rgba(0,0,0,0),#000),linear-gradient(to right,#fff,#f03208);"></div>
<svg style="left:683.40px;top:213.60px;" width="4.4" height="4.4" viewBox="0 0 4.4 4.4"><circle cx="2.2" cy="2.2" r="1.3" stroke="#ddd" stroke-width=".5" fill="none"/></svg>
<svg style="left:640.00px;top:182.00px;" width="8" height="9" viewBox="0 0 8 9"><g transform="rotate(-32 4 4.5)"><rect x="1.4" y="0.6" width="5.2" height="7.6" stroke="#fff" stroke-width=".6" fill="none"/><path d="M1.4 3.2h5.2M1.4 5.6h5.2" stroke="#fff" stroke-width=".4"/></g></svg>
<div style="left:631.80px;top:244.80px;width:9.80px;height:10.80px;background:#4a5070;"></div>
<div style="left:632.60px;top:245.60px;width:8.20px;height:9.20px;background:#8b2c1b;"></div>
<div style="left:625.60px;top:239.00px;width:9.60px;height:9.60px;background:#5a5a5a;"></div>
<div style="left:626.20px;top:239.60px;width:8.40px;height:8.40px;background:#f6f6f6;"></div>
<div style="left:626.2px;top:257px;width:15px;height:3.4px;background:repeating-conic-gradient(#fff 0 25%,#9a9a9a 0 50%) 0 0/1.7px 1.7px;"></div>
<div style="left:685.2px;top:258.4px;width:2.2px;height:2.2px;border-radius:50%;background:#c81c1c"></div>
<span style="left:688.20px;top:258.02px;font-size:3.2px;line-height:4.80px;height:4.80px;color:#cfcfcf;">138</span>
<div style="left:694.6px;top:258.4px;width:2.2px;height:2.2px;border-radius:50%;background:#1ca038"></div>
<span style="left:697.60px;top:258.02px;font-size:3.2px;line-height:4.80px;height:4.80px;color:#cfcfcf;">44</span>
<div style="left:703.6px;top:258.4px;width:2.2px;height:2.2px;border-radius:50%;background:#1c30c8"></div>
<span style="left:706.60px;top:258.02px;font-size:3.2px;line-height:4.80px;height:4.80px;color:#cfcfcf;">27</span>
<svg style="left:714.00px;top:257.40px" width="4.40" height="4.40"><rect x="0.25" y="0.25" width="3.90" height="3.90" rx="1.95" ry="1.95" fill="none" stroke="#aaa" stroke-width="0.5"/></svg>
<div style="left:625.50px;top:262.20px;width:94.50px;height:0.50px;background:#2f2f2f;"></div>
<div style="left:631.00px;top:262.80px;width:23.60px;height:5.00px;background:#4b4b4b;"></div>
<div style="left:628.00px;top:263.60px;width:0.50px;height:3.00px;background:#666;"></div>
<svg style="left:632.00px;top:263.20px;" width="5" height="4.4" viewBox="0 0 5 4.4"><rect x=".6" y=".6" width="2.6" height="2.4" stroke="#ddd" stroke-width=".5" fill="none"/><rect x="1.8" y="1.6" width="2.6" height="2.4" fill="#ddd"/></svg>
<span style="left:638.00px;top:264.02px;font-size:2.9px;line-height:4.35px;height:4.35px;color:#a6a6a6;">Layer Comp</span>
<div style="left:655.60px;top:263.00px;width:20.00px;height:4.60px;background:#454545;"></div>
<span style="left:661.20px;top:264.02px;font-size:2.7px;line-height:4.05px;height:4.05px;color:#7d7d7d;">Color Set</span>
<svg style="left:657.00px;top:264.00px" width="3.60" height="3.00"><rect x="0.20" y="0.20" width="3.20" height="2.60" rx="0.00" ry="0.00" fill="none" stroke="#777" stroke-width="0.4"/></svg>
<div style="left:676.40px;top:263.00px;width:21.60px;height:4.60px;background:#454545;"></div>
<span style="left:682.00px;top:264.02px;font-size:2.7px;line-height:4.05px;height:4.05px;color:#7d7d7d;">Color History</span>
<svg style="left:677.80px;top:264.00px" width="3.60" height="3.00"><rect x="0.20" y="0.20" width="3.20" height="2.60" rx="0.00" ry="0.00" fill="none" stroke="#777" stroke-width="0.4"/></svg>
<div style="left:625.50px;top:268.60px;width:94.50px;height:7.20px;background:#3c3c3c;"></div>
<svg style="left:626.20px;top:271.00px;" width="4.4" height="3.2" viewBox="0 0 4.4 3.2"><path d="M.4 1.6Q2.2 -.2 4 1.6Q2.2 3.4 .4 1.6z" fill="#d0d0d0"/><circle cx="2.2" cy="1.6" r=".7" fill="#444"/></svg>
<svg style="left:0.00px;top:0.00px;" width="1" height="1" viewBox="0 0 1 1"></svg>
<span style="left:637.20px;top:271.02px;font-size:3.2px;line-height:4.80px;height:4.80px;color:#d2d2d2;">Last document state</span>
<div style="left:625.50px;top:275.60px;width:94.50px;height:0.40px;background:#353535;"></div>
<div style="left:625.50px;top:395.20px;width:94.50px;height:9.80px;background:#454545;"></div>
<svg style="left:626.80px;top:396.80px" width="3.80" height="3.80"><rect x="0.25" y="0.25" width="3.30" height="3.30" rx="0.40" ry="0.40" fill="none" stroke="#c8c8c8" stroke-width="0.5"/></svg>
<svg style="left:683.20px;top:397.47px" width="1.86" height="1.86"><path d="M0.2 1.40L0.93 0.46L1.66 1.40" stroke="#777" stroke-width="0.45" fill="none"/></svg>
<svg style="left:689.20px;top:397.47px" width="1.86" height="1.86"><path d="M0.2 0.46L0.93 1.40L1.66 0.46" stroke="#777" stroke-width="0.45" fill="none"/></svg>
<span style="left:695.60px;top:397.02px;font-size:3px;line-height:4.50px;height:4.50px;color:#777;">▫</span>
<span style="left:701.80px;top:397.02px;font-size:3px;line-height:4.50px;height:4.50px;color:#777;">▫</span>
<svg style="left:710.00px;top:396.80px" width="3.40" height="3.40"><rect x="0.20" y="0.20" width="3.00" height="3.00" rx="0.00" ry="0.00" fill="#6a6a6a" stroke="#c0c0c0" stroke-width="0.4"/></svg>
<span style="left:716.00px;top:397.02px;font-size:3px;line-height:4.50px;height:4.50px;color:#777;">▫</span>
</div>
</body></html>
